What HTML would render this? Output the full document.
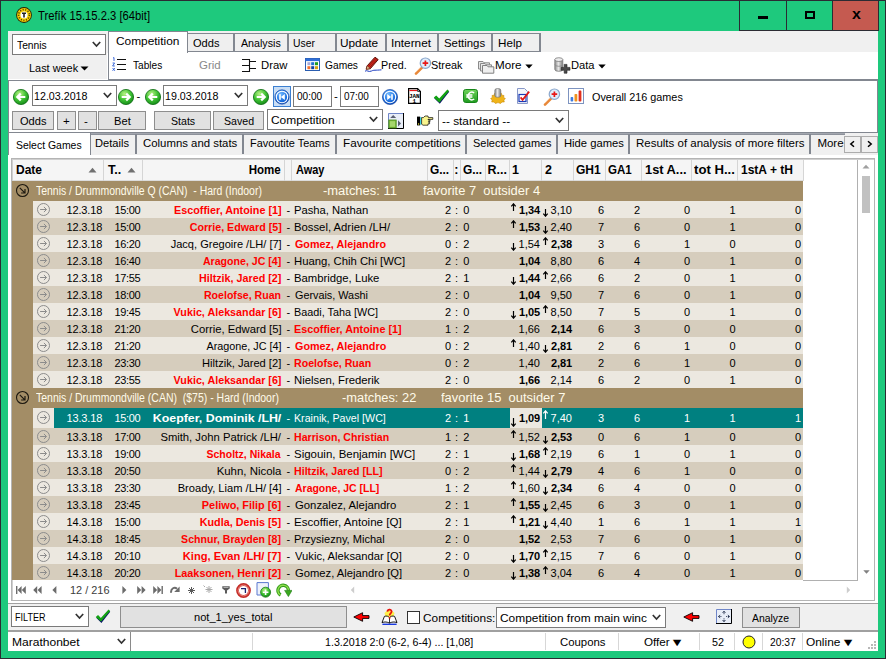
<!DOCTYPE html>
<html><head><meta charset="utf-8"><title>Trefík 15.15.2.3 [64bit]</title>
<style>
html,body{margin:0;padding:0;}
body{width:886px;height:659px;overflow:hidden;position:relative;background:#1ec97d;font-family:"Liberation Sans",sans-serif;font-size:12px;color:#000;}
div,span,svg{position:absolute;box-sizing:border-box;}
span{line-height:16px;white-space:pre;}
.b{font-weight:bold;}

</style></head>
<body>
<div style="left:0px;top:0px;width:886px;height:659px;border:1px solid #2b2b33;"></div>
<div style="left:8px;top:31px;width:870px;height:620px;background:#f0f0f0;"></div>
<span id="t1" style="top:8.0px;font-size:12px;left:37.5px;transform:scaleX(0.937);transform-origin:0 50%;">Trefík 15.15.2.3 [64bit]</span>
<div style="left:739px;top:1px;width:140px;height:30px;border-left:1px solid #2b2b33;border-bottom:1px solid #2b2b33;border-right:1px solid #2b2b33;"></div>
<div style="left:786px;top:1px;width:1px;height:29px;background:#2b2b33;"></div>
<div style="left:832px;top:1px;width:1px;height:29px;background:#2b2b33;"></div>
<div style="left:833px;top:1px;width:45px;height:29px;background:#c55a50;"></div>
<div style="left:758px;top:16px;width:10px;height:3px;background:#000;"></div>
<div style="left:805px;top:11px;width:10px;height:8px;border:2px solid #000;"></div>
<span id="t2" style="top:6.0px;font-size:15px;left:851.5px;transform:scaleX(1.0625);transform-origin:0 50%;font-weight:bold;">x</span>
<div style="left:12px;top:34px;width:94px;height:21px;background:#fff;border:1px solid #7a7a7a;"></div>
<span id="t3" style="top:37.0px;font-size:11.5px;left:17.0px;transform:scaleX(0.8939);transform-origin:0 50%;">Tennis</span>
<svg style="left:92px;top:40.5px" width="9" height="7" viewBox="0 0 9 7"><path d="M0.8 1 L4.5 5 L8.2 1" stroke="#333" stroke-width="1.7" fill="none"/></svg>
<div style="left:108px;top:52px;width:770px;height:29px;background:#fff;border-left:1px solid #828790;border-bottom:2px solid #828790;"></div>
<div style="left:107px;top:53px;width:1px;height:27px;background:#fff;"></div>
<div style="left:8px;top:79px;width:100px;height:1px;background:#fff;"></div>
<div style="left:188px;top:33px;width:47px;height:19px;background:#efefef;border:1px solid #828790;border-left:none;border-right-width:2px;"></div>
<span id="t4" style="top:35.0px;font-size:11.5px;left:193.0px;transform:scaleX(0.963);transform-origin:0 50%;">Odds</span>
<div style="left:235px;top:33px;width:54px;height:19px;background:#efefef;border:1px solid #828790;border-left:none;border-right-width:2px;"></div>
<span id="t5" style="top:35.0px;font-size:11.5px;left:240.5px;transform:scaleX(0.9286);transform-origin:0 50%;">Analysis</span>
<div style="left:289px;top:33px;width:48px;height:19px;background:#efefef;border:1px solid #828790;border-left:none;border-right-width:2px;"></div>
<span id="t6" style="top:35.0px;font-size:11.5px;left:292.9px;transform:scaleX(0.9);transform-origin:0 50%;">User</span>
<div style="left:337px;top:33px;width:50px;height:19px;background:#efefef;border:1px solid #828790;border-left:none;border-right-width:2px;"></div>
<span id="t7" style="top:35.0px;font-size:11.5px;left:340.47px;transform:scaleX(1.0278);transform-origin:0 50%;">Update</span>
<div style="left:387px;top:33px;width:52px;height:19px;background:#efefef;border:1px solid #828790;border-left:none;border-right-width:2px;"></div>
<span id="t8" style="top:35.0px;font-size:11.5px;left:390.77px;transform:scaleX(1.0263);transform-origin:0 50%;">Internet</span>
<div style="left:439px;top:33px;width:54px;height:19px;background:#efefef;border:1px solid #828790;border-left:none;border-right-width:2px;"></div>
<span id="t9" style="top:35.0px;font-size:11.5px;left:444.21px;transform:scaleX(0.99);transform-origin:0 50%;">Settings</span>
<div style="left:493px;top:33px;width:48px;height:19px;background:#efefef;border:1px solid #828790;border-left:none;border-right-width:2px;"></div>
<span id="t10" style="top:35.0px;font-size:11.5px;left:497.79px;transform:scaleX(1.0136);transform-origin:0 50%;">Help</span>
<div style="left:108px;top:31px;width:80px;height:22px;background:#fff;border:1px solid #828790;border-bottom:none;"></div>
<span id="t11" style="top:33.0px;font-size:11.5px;left:115.97px;transform:scaleX(1.0333);transform-origin:0 50%;">Competition</span>
<span id="t12" style="top:59.5px;font-size:11.5px;left:28.55px;transform:scaleX(0.949);transform-origin:0 50%;">Last week</span>
<svg style="left:80px;top:66px" width="9" height="5" viewBox="0 0 9 5"><path d="M0.5 0.5 L8.5 0.5 L4.5 4.5 Z" fill="#000"/></svg>
<span id="t13" style="top:57.0px;font-size:11.5px;left:133.0px;transform:scaleX(0.8788);transform-origin:0 50%;color:#000;">Tables</span>
<span id="t14" style="top:57.0px;font-size:11.5px;left:199.0px;color:#8a8a8a;">Grid</span>
<span id="t15" style="top:57.0px;font-size:11.5px;left:261.02px;transform:scaleX(0.9808);transform-origin:0 50%;color:#000;">Draw</span>
<span id="t16" style="top:57.0px;font-size:11.5px;left:325.01px;transform:scaleX(0.8889);transform-origin:0 50%;color:#000;">Games</span>
<span id="t17" style="top:57.0px;font-size:11.5px;left:380.57px;transform:scaleX(0.9346);transform-origin:0 50%;color:#000;">Pred.</span>
<span id="t18" style="top:57.0px;font-size:11.5px;left:430.95px;transform:scaleX(0.9469);transform-origin:0 50%;color:#000;">Streak</span>
<span id="t19" style="top:57.0px;font-size:11.5px;left:494.79px;transform:scaleX(1.012);transform-origin:0 50%;color:#000;">More</span>
<span id="t20" style="top:57.0px;font-size:11.5px;left:570.53px;transform:scaleX(0.9696);transform-origin:0 50%;color:#000;">Data</span>
<svg style="left:525px;top:64px" width="8" height="5" viewBox="0 0 8 5"><path d="M0.3 0.5 L7.7 0.5 L4 4.5 Z" fill="#000"/></svg>
<svg style="left:598px;top:64px" width="8" height="5" viewBox="0 0 8 5"><path d="M0.3 0.5 L7.7 0.5 L4 4.5 Z" fill="#000"/></svg>
<div style="left:8px;top:80px;width:100px;height:1px;background:#828790;"></div>
<div style="left:8px;top:81px;width:870px;height:52px;background:#fff;border-left:1px solid #828790;border-right:1px solid #828790;"></div>
<div style="left:32px;top:85px;width:85px;height:21px;background:#fff;border:1px solid #7a7a7a;"></div>
<span id="t21" style="top:88.0px;font-size:11.5px;left:34.17px;transform:scaleX(0.9286);transform-origin:0 50%;">12.03.2018</span>
<svg style="left:103px;top:91.5px" width="9" height="7" viewBox="0 0 9 7"><path d="M0.8 1 L4.5 5 L8.2 1" stroke="#333" stroke-width="1.7" fill="none"/></svg>
<div style="left:163px;top:85px;width:85px;height:21px;background:#fff;border:1px solid #7a7a7a;"></div>
<span id="t22" style="top:88.0px;font-size:11.5px;left:165.17px;transform:scaleX(0.9286);transform-origin:0 50%;">19.03.2018</span>
<svg style="left:234px;top:91.5px" width="9" height="7" viewBox="0 0 9 7"><path d="M0.8 1 L4.5 5 L8.2 1" stroke="#333" stroke-width="1.7" fill="none"/></svg>
<span id="t23" style="top:88.0px;font-size:11.5px;left:136.5px;">-</span>
<span id="t24" style="top:88.0px;font-size:11.5px;left:334.0px;">-</span>
<div style="left:293px;top:86px;width:39px;height:21px;background:#fff;border:1px solid #7a7a7a;"></div>
<span id="t25" style="top:88.0px;font-size:11.5px;left:297.0px;transform:scaleX(0.8724);transform-origin:0 50%;">00:00</span>
<div style="left:340px;top:86px;width:39px;height:21px;background:#fff;border:1px solid #7a7a7a;"></div>
<span id="t26" style="top:88.0px;font-size:11.5px;left:343.5px;transform:scaleX(0.8621);transform-origin:0 50%;">07:00</span>
<span id="t27" style="top:88.5px;font-size:11.5px;left:591.5px;transform:scaleX(0.9406);transform-origin:0 50%;">Overall 216 games</span>
<div style="left:12px;top:111px;width:42px;height:19px;background:#e1e1e1;border:1px solid #8e8e8e;"></div>
<span id="t28" style="top:112.5px;font-size:11.5px;left:20.0px;transform:scaleX(0.963);transform-origin:0 50%;">Odds</span>
<div style="left:57px;top:111px;width:19px;height:19px;background:#e1e1e1;border:1px solid #8e8e8e;"></div>
<span id="t29" style="top:112.5px;font-size:11.5px;left:63.0px;">+</span>
<div style="left:78px;top:111px;width:19px;height:19px;background:#e1e1e1;border:1px solid #8e8e8e;"></div>
<span id="t30" style="top:112.5px;font-size:11.5px;left:84.0px;">-</span>
<div style="left:98px;top:111px;width:48px;height:19px;background:#e1e1e1;border:1px solid #8e8e8e;"></div>
<span id="t31" style="top:112.5px;font-size:11.5px;left:114.03px;transform:scaleX(0.9688);transform-origin:0 50%;">Bet</span>
<div style="left:154px;top:111px;width:57px;height:19px;background:#e1e1e1;border:1px solid #8e8e8e;"></div>
<span id="t32" style="top:112.5px;font-size:11.5px;left:171.28px;transform:scaleX(0.92);transform-origin:0 50%;">Stats</span>
<div style="left:213px;top:111px;width:51px;height:19px;background:#e1e1e1;border:1px solid #8e8e8e;"></div>
<span id="t33" style="top:112.5px;font-size:11.5px;left:223.88px;transform:scaleX(0.9226);transform-origin:0 50%;">Saved</span>
<div style="left:267px;top:109px;width:116px;height:21px;background:#fff;border:1px solid #7a7a7a;"></div>
<span id="t34" style="top:111.5px;font-size:11.5px;left:270.86px;transform:scaleX(1.0367);transform-origin:0 50%;">Competition</span>
<svg style="left:369px;top:115.5px" width="9" height="7" viewBox="0 0 9 7"><path d="M0.8 1 L4.5 5 L8.2 1" stroke="#333" stroke-width="1.7" fill="none"/></svg>
<div style="left:438px;top:110px;width:131px;height:21px;background:#fff;border:1px solid #7a7a7a;"></div>
<span id="t35" style="top:112.5px;font-size:11.5px;left:442.07px;transform:scaleX(1.0262);transform-origin:0 50%;">-- standard --</span>
<svg style="left:555px;top:116.5px" width="9" height="7" viewBox="0 0 9 7"><path d="M0.8 1 L4.5 5 L8.2 1" stroke="#333" stroke-width="1.7" fill="none"/></svg>
<div style="left:8px;top:132px;width:870px;height:1px;background:#828790;"></div>
<div style="left:8px;top:133px;width:870px;height:22px;background:#f0f0f0;"></div>
<div style="left:91px;top:133px;width:754px;height:2px;background:linear-gradient(#aeb2b9,#828790);"></div>
<div style="left:8px;top:155px;width:870px;height:448px;background:#fff;"></div>
<div style="left:135px;top:134px;width:2px;height:20px;background:#828790;"></div>
<span id="t36" style="top:135.0px;font-size:11.5px;left:95.23px;transform:scaleX(0.9676);transform-origin:0 50%;">Details</span>
<div style="left:242px;top:134px;width:2px;height:20px;background:#828790;"></div>
<span id="t37" style="top:135.0px;font-size:11.5px;left:142.91px;transform:scaleX(0.9894);transform-origin:0 50%;">Columns and stats</span>
<div style="left:335px;top:134px;width:2px;height:20px;background:#828790;"></div>
<span id="t38" style="top:135.0px;font-size:11.5px;left:250.15px;transform:scaleX(0.9482);transform-origin:0 50%;">Favoutite Teams</span>
<div style="left:465px;top:134px;width:2px;height:20px;background:#828790;"></div>
<span id="t39" style="top:135.0px;font-size:11.5px;left:342.88px;transform:scaleX(1.0175);transform-origin:0 50%;">Favourite competitions</span>
<div style="left:556px;top:134px;width:2px;height:20px;background:#828790;"></div>
<span id="t40" style="top:135.0px;font-size:11.5px;left:472.95px;transform:scaleX(0.9531);transform-origin:0 50%;">Selected games</span>
<div style="left:628px;top:134px;width:2px;height:20px;background:#828790;"></div>
<span id="t41" style="top:135.0px;font-size:11.5px;left:563.52px;transform:scaleX(0.975);transform-origin:0 50%;">Hide games</span>
<div style="left:809px;top:134px;width:2px;height:20px;background:#828790;"></div>
<span id="t42" style="top:135.0px;font-size:11.5px;left:636.0px;transform:scaleX(0.9988);transform-origin:0 50%;">Results of analysis of more filters</span>
<span id="t43" style="top:135.0px;font-size:11.5px;left:817.4px;">More</span>
<div style="left:8px;top:132px;width:83px;height:23px;background:#fff;border:1px solid #828790;border-bottom:none;"></div>
<span id="t44" style="top:136.5px;font-size:11.5px;left:16.09px;transform:scaleX(0.9085);transform-origin:0 50%;">Select Games</span>
<div style="left:844px;top:136px;width:17px;height:17px;background:#f0f0f0;border:1px solid #adadad;"></div>
<svg style="left:848px;top:140px" width="9" height="8" viewBox="0 0 9 8"><path d="M6 1.2 L2.8 4 L6 6.8" stroke="#000" stroke-width="1.5" fill="none"/></svg>
<div style="left:861px;top:136px;width:17px;height:17px;background:#f0f0f0;border:1px solid #adadad;"></div>
<svg style="left:865px;top:140px" width="9" height="8" viewBox="0 0 9 8"><path d="M3 1.2 L6.2 4 L3 6.8" stroke="#000" stroke-width="1.5" fill="none"/></svg>
<div style="left:11px;top:158px;width:864px;height:443px;background:#fff;border:1px solid #b4b4b4;"></div>
<div style="left:12px;top:159px;width:862px;height:1px;background:#cfcfcf;"></div>
<div style="left:12px;top:159px;width:1px;height:441px;background:#cfcfcf;"></div>
<div style="left:13px;top:160px;width:790px;height:21px;background:#f5f5f5;border-bottom:1px solid #dcdcdc;"></div>
<div style="left:103px;top:160px;width:1px;height:21px;background:#d5d5d5;"></div>
<div style="left:142px;top:160px;width:1px;height:21px;background:#d5d5d5;"></div>
<div style="left:284px;top:160px;width:1px;height:21px;background:#d5d5d5;"></div>
<div style="left:291px;top:160px;width:1px;height:21px;background:#d5d5d5;"></div>
<div style="left:427px;top:160px;width:1px;height:21px;background:#d5d5d5;"></div>
<div style="left:453px;top:160px;width:1px;height:21px;background:#d5d5d5;"></div>
<div style="left:460px;top:160px;width:1px;height:21px;background:#d5d5d5;"></div>
<div style="left:485px;top:160px;width:1px;height:21px;background:#d5d5d5;"></div>
<div style="left:509px;top:160px;width:1px;height:21px;background:#d5d5d5;"></div>
<div style="left:541px;top:160px;width:1px;height:21px;background:#d5d5d5;"></div>
<div style="left:573px;top:160px;width:1px;height:21px;background:#d5d5d5;"></div>
<div style="left:605px;top:160px;width:1px;height:21px;background:#d5d5d5;"></div>
<div style="left:641px;top:160px;width:1px;height:21px;background:#d5d5d5;"></div>
<div style="left:691px;top:160px;width:1px;height:21px;background:#d5d5d5;"></div>
<div style="left:737px;top:160px;width:1px;height:21px;background:#d5d5d5;"></div>
<div style="left:803px;top:160px;width:1px;height:21px;background:#d5d5d5;"></div>
<span id="t45" style="top:161.5px;font-size:12.5px;left:15.54px;transform:scaleX(0.9615);transform-origin:0 50%;font-weight:bold;">Date</span>
<span id="t46" style="top:161.5px;font-size:12.5px;left:108.1px;font-weight:bold;">T..</span>
<span id="t47" style="top:161.5px;font-size:12.5px;right:604.82px;transform:scaleX(0.9242);transform-origin:100% 50%;font-weight:bold;">Home</span>
<span id="t48" style="top:161.5px;font-size:12.5px;left:295.5px;transform:scaleX(0.875);transform-origin:0 50%;font-weight:bold;">Away</span>
<span id="t49" style="top:161.5px;font-size:12.5px;left:430.0px;transform:scaleX(0.95);transform-origin:0 50%;font-weight:bold;">G...</span>
<span id="t50" style="top:161.5px;font-size:12.5px;left:454.2px;font-weight:bold;">:</span>
<span id="t51" style="top:161.5px;font-size:12.5px;left:463.0px;transform:scaleX(0.95);transform-origin:0 50%;font-weight:bold;">G...</span>
<span id="t52" style="top:161.5px;font-size:12.5px;left:487.5px;font-weight:bold;">R...</span>
<span id="t53" style="top:161.5px;font-size:12.5px;left:512.0px;font-weight:bold;">1</span>
<span id="t54" style="top:161.5px;font-size:12.5px;left:545.0px;font-weight:bold;">2</span>
<span id="t55" style="top:161.5px;font-size:12.5px;left:576.0px;transform:scaleX(0.9615);transform-origin:0 50%;font-weight:bold;">GH1</span>
<span id="t56" style="top:161.5px;font-size:12.5px;left:608.0px;transform:scaleX(0.9231);transform-origin:0 50%;font-weight:bold;">GA1</span>
<span id="t57" style="top:161.5px;font-size:12.5px;left:645.47px;transform:scaleX(1.0256);transform-origin:0 50%;font-weight:bold;">1st A...</span>
<span id="t58" style="top:161.5px;font-size:12.5px;left:694.0px;transform:scaleX(1.0526);transform-origin:0 50%;font-weight:bold;">tot H...</span>
<span id="t59" style="top:161.5px;font-size:12.5px;left:740.54px;transform:scaleX(0.9615);transform-origin:0 50%;font-weight:bold;">1stA + tH</span>
<svg style="left:88px;top:167px" width="9" height="6" viewBox="0 0 9 6"><path d="M0.5 5.5 L4.5 0.8 L8.5 5.5 Z" fill="#707070"/></svg>
<svg style="left:127px;top:167px" width="9" height="6" viewBox="0 0 9 6"><path d="M0.5 5.5 L4.5 0.8 L8.5 5.5 Z" fill="#707070"/></svg>
<div style="left:857px;top:160px;width:1px;height:421px;background:#b0b0b0;"></div>
<div style="left:862px;top:176px;width:8px;height:37px;background:#c1c1c1;"></div>
<svg style="left:862px;top:164px" width="8" height="5" viewBox="0 0 8 5"><path d="M0.5 4.5 L4 0.8 L7.5 4.5 Z" fill="#a0a0a0"/></svg>
<svg style="left:862.5px;top:569.5px" width="7" height="4" viewBox="0 0 7 4"><path d="M0.3 0.3 L3.5 3.8 L6.7 0.3 Z" fill="#808080"/></svg>
<div style="left:12px;top:181px;width:791px;height:399px;background:#a38d66;"></div>
<svg style="left:15px;top:183px" width="15" height="15" viewBox="0 0 15 15"><circle cx="7.5" cy="7.5" r="6" fill="none" stroke="#1c1810" stroke-width="1.1"/><path d="M4.8 4.8 L9.8 9.8 M6.1 10.0 H10.0 V6.1" stroke="#1c1810" stroke-width="1.2" fill="none"/></svg>
<span id="t60" style="top:183.0px;font-size:12px;left:36.0px;transform:scaleX(0.8707);transform-origin:0 50%;color:#fffbea;">Tennis / Drummondville Q (CAN)  - Hard (Indoor)</span>
<span id="t61" style="top:183.0px;font-size:12.5px;left:322.76px;transform:scaleX(1.0357);transform-origin:0 50%;color:#fffbea;">-matches: 11</span>
<span id="t62" style="top:183.0px;font-size:12.5px;left:422.7px;transform:scaleX(1.0336);transform-origin:0 50%;color:#fffbea;">favorite 7  outsider 4</span>
<div style="left:33px;top:201px;width:770px;height:17px;background:#ece8e0;"></div>
<svg style="left:36px;top:202px" width="15" height="15" viewBox="0 0 15 15"><circle cx="7.5" cy="7.5" r="6" fill="none" stroke="#8c8c8c" stroke-width="1"/><path d="M4.1 7.5 H10.3 M7.9 4.9 L10.5 7.5 L7.9 10.1" stroke="#8c8c8c" stroke-width="1" fill="none"/></svg>
<span style="top:201.5px;font-size:11px;color:#000;right:783.7px;letter-spacing:-0.16px;margin-right:0.16px;">12.3.18</span>
<span style="top:201.5px;font-size:11px;color:#000;left:114.4px;letter-spacing:-0.3px;">15:00</span>
<span id="t63" style="top:201.5px;font-size:11px;right:604.5px;transform:scaleX(0.9815);transform-origin:100% 50%;font-weight:bold;color:#ff0000;">Escoffier, Antoine [1]</span>
<span style="top:201.5px;font-size:11px;color:#000;left:286.6px;">-</span>
<span id="t64" style="top:201.5px;font-size:11px;left:294.08px;transform:scaleX(1.0183);transform-origin:0 50%;color:#000;">Pasha, Nathan</span>
<span style="top:201.5px;font-size:11px;color:#000;right:434.8px;">2</span>
<span style="top:202.0px;font-size:11px;color:#000;left:455px;">:</span>
<span style="top:201.5px;font-size:11px;color:#000;left:463.2px;">0</span>
<svg style="left:510px;top:203px" width="7" height="8" viewBox="0 0 7 8"><path d="M3.5 0.8 V8 M1.3 3.3 L3.5 0.8 L5.7 3.3" stroke="#000" stroke-width="1.2" fill="none"/></svg>
<span style="top:201.5px;font-size:11px;color:#000;font-weight:bold;right:346px;letter-spacing:-0.12px;margin-right:0.12px;">1,34</span>
<svg style="left:542px;top:209px" width="7" height="8" viewBox="0 0 7 8"><path d="M3.5 0 V7.2 M1.3 4.7 L3.5 7.2 L5.7 4.7" stroke="#000" stroke-width="1.2" fill="none"/></svg>
<span style="top:201.5px;font-size:11px;color:#000;right:314px;">3,10</span>
<span style="top:201.5px;font-size:11px;color:#000;right:282px;">6</span>
<span style="top:201.5px;font-size:11px;color:#000;right:246px;">2</span>
<span style="top:201.5px;font-size:11px;color:#000;right:196px;">0</span>
<span style="top:201.5px;font-size:11px;color:#000;right:150.5px;">1</span>
<span style="top:201.5px;font-size:11px;color:#000;right:85px;">0</span>
<div style="left:33px;top:218px;width:770px;height:17px;background:#d6cdbd;"></div>
<svg style="left:36px;top:219px" width="15" height="15" viewBox="0 0 15 15"><circle cx="7.5" cy="7.5" r="6" fill="none" stroke="#8c8c8c" stroke-width="1"/><path d="M4.1 7.5 H10.3 M7.9 4.9 L10.5 7.5 L7.9 10.1" stroke="#8c8c8c" stroke-width="1" fill="none"/></svg>
<span style="top:218.5px;font-size:11px;color:#000;right:783.7px;letter-spacing:-0.16px;margin-right:0.16px;">12.3.18</span>
<span style="top:218.5px;font-size:11px;color:#000;left:114.4px;letter-spacing:-0.3px;">15:00</span>
<span id="t65" style="top:218.5px;font-size:11px;right:604.37px;transform:scaleX(0.9713);transform-origin:100% 50%;font-weight:bold;color:#ff0000;">Corrie, Edward [5]</span>
<span style="top:218.5px;font-size:11px;color:#000;left:286.6px;">-</span>
<span id="t66" style="top:218.5px;font-size:11px;left:294.07px;transform:scaleX(1.0269);transform-origin:0 50%;color:#000;">Bossel, Adrien /LH/</span>
<span style="top:218.5px;font-size:11px;color:#000;right:434.8px;">2</span>
<span style="top:219.0px;font-size:11px;color:#000;left:455px;">:</span>
<span style="top:218.5px;font-size:11px;color:#000;left:463.2px;">0</span>
<svg style="left:510px;top:220px" width="7" height="8" viewBox="0 0 7 8"><path d="M3.5 0.8 V8 M1.3 3.3 L3.5 0.8 L5.7 3.3" stroke="#000" stroke-width="1.2" fill="none"/></svg>
<span style="top:218.5px;font-size:11px;color:#000;font-weight:bold;right:346px;letter-spacing:-0.12px;margin-right:0.12px;">1,53</span>
<svg style="left:542px;top:226px" width="7" height="8" viewBox="0 0 7 8"><path d="M3.5 0 V7.2 M1.3 4.7 L3.5 7.2 L5.7 4.7" stroke="#000" stroke-width="1.2" fill="none"/></svg>
<span style="top:218.5px;font-size:11px;color:#000;right:314px;">2,40</span>
<span style="top:218.5px;font-size:11px;color:#000;right:282px;">7</span>
<span style="top:218.5px;font-size:11px;color:#000;right:246px;">6</span>
<span style="top:218.5px;font-size:11px;color:#000;right:196px;">0</span>
<span style="top:218.5px;font-size:11px;color:#000;right:150.5px;">1</span>
<span style="top:218.5px;font-size:11px;color:#000;right:85px;">0</span>
<div style="left:33px;top:235px;width:770px;height:17px;background:#ece8e0;"></div>
<svg style="left:36px;top:236px" width="15" height="15" viewBox="0 0 15 15"><circle cx="7.5" cy="7.5" r="6" fill="none" stroke="#8c8c8c" stroke-width="1"/><path d="M4.1 7.5 H10.3 M7.9 4.9 L10.5 7.5 L7.9 10.1" stroke="#8c8c8c" stroke-width="1" fill="none"/></svg>
<span style="top:235.5px;font-size:11px;color:#000;right:783.7px;letter-spacing:-0.16px;margin-right:0.16px;">12.3.18</span>
<span style="top:235.5px;font-size:11px;color:#000;left:114.4px;letter-spacing:-0.3px;">16:20</span>
<span id="t67" style="top:235.5px;font-size:11px;right:604.43px;transform:scaleX(1.0027);transform-origin:100% 50%;color:#000;">Jacq, Gregoire /LH/ [7]</span>
<span style="top:235.5px;font-size:11px;color:#000;left:286.6px;">-</span>
<span id="t68" style="top:235.5px;font-size:11px;left:295.1px;transform:scaleX(0.9774);transform-origin:0 50%;font-weight:bold;color:#ff0000;">Gomez, Alejandro</span>
<span style="top:235.5px;font-size:11px;color:#000;right:434.8px;">0</span>
<span style="top:236.0px;font-size:11px;color:#000;left:455px;">:</span>
<span style="top:235.5px;font-size:11px;color:#000;left:463.2px;">2</span>
<svg style="left:510px;top:243px" width="7" height="8" viewBox="0 0 7 8"><path d="M3.5 0 V7.2 M1.3 4.7 L3.5 7.2 L5.7 4.7" stroke="#000" stroke-width="1.2" fill="none"/></svg>
<span style="top:235.5px;font-size:11px;color:#000;right:346px;">1,54</span>
<svg style="left:542px;top:237px" width="7" height="8" viewBox="0 0 7 8"><path d="M3.5 0.8 V8 M1.3 3.3 L3.5 0.8 L5.7 3.3" stroke="#000" stroke-width="1.2" fill="none"/></svg>
<span style="top:235.5px;font-size:11px;color:#000;font-weight:bold;right:314px;letter-spacing:-0.12px;margin-right:0.12px;">2,38</span>
<span style="top:235.5px;font-size:11px;color:#000;right:282px;">3</span>
<span style="top:235.5px;font-size:11px;color:#000;right:246px;">6</span>
<span style="top:235.5px;font-size:11px;color:#000;right:196px;">1</span>
<span style="top:235.5px;font-size:11px;color:#000;right:150.5px;">0</span>
<span style="top:235.5px;font-size:11px;color:#000;right:85px;">0</span>
<div style="left:33px;top:252px;width:770px;height:17px;background:#d6cdbd;"></div>
<svg style="left:36px;top:253px" width="15" height="15" viewBox="0 0 15 15"><circle cx="7.5" cy="7.5" r="6" fill="none" stroke="#8c8c8c" stroke-width="1"/><path d="M4.1 7.5 H10.3 M7.9 4.9 L10.5 7.5 L7.9 10.1" stroke="#8c8c8c" stroke-width="1" fill="none"/></svg>
<span style="top:252.5px;font-size:11px;color:#000;right:783.7px;letter-spacing:-0.16px;margin-right:0.16px;">12.3.18</span>
<span style="top:252.5px;font-size:11px;color:#000;left:114.4px;letter-spacing:-0.3px;">16:40</span>
<span id="t69" style="top:252.5px;font-size:11px;right:604.81px;transform:scaleX(0.9642);transform-origin:100% 50%;font-weight:bold;color:#ff0000;">Aragone, JC [4]</span>
<span style="top:252.5px;font-size:11px;color:#000;left:286.6px;">-</span>
<span id="t70" style="top:252.5px;font-size:11px;left:294.07px;transform:scaleX(1.0271);transform-origin:0 50%;color:#000;">Huang, Chih Chi [WC]</span>
<span style="top:252.5px;font-size:11px;color:#000;right:434.8px;">2</span>
<span style="top:253.0px;font-size:11px;color:#000;left:455px;">:</span>
<span style="top:252.5px;font-size:11px;color:#000;left:463.2px;">0</span>

<span style="top:252.5px;font-size:11px;color:#000;font-weight:bold;right:346px;letter-spacing:-0.12px;margin-right:0.12px;">1,04</span>

<span style="top:252.5px;font-size:11px;color:#000;right:314px;">8,80</span>
<span style="top:252.5px;font-size:11px;color:#000;right:282px;">6</span>
<span style="top:252.5px;font-size:11px;color:#000;right:246px;">4</span>
<span style="top:252.5px;font-size:11px;color:#000;right:196px;">0</span>
<span style="top:252.5px;font-size:11px;color:#000;right:150.5px;">1</span>
<span style="top:252.5px;font-size:11px;color:#000;right:85px;">0</span>
<div style="left:33px;top:269px;width:770px;height:17px;background:#ece8e0;"></div>
<svg style="left:36px;top:270px" width="15" height="15" viewBox="0 0 15 15"><circle cx="7.5" cy="7.5" r="6" fill="none" stroke="#8c8c8c" stroke-width="1"/><path d="M4.1 7.5 H10.3 M7.9 4.9 L10.5 7.5 L7.9 10.1" stroke="#8c8c8c" stroke-width="1" fill="none"/></svg>
<span style="top:269.5px;font-size:11px;color:#000;right:783.7px;letter-spacing:-0.16px;margin-right:0.16px;">12.3.18</span>
<span style="top:269.5px;font-size:11px;color:#000;left:114.4px;letter-spacing:-0.3px;">17:55</span>
<span id="t71" style="top:269.5px;font-size:11px;right:604.75px;transform:scaleX(0.9771);transform-origin:100% 50%;font-weight:bold;color:#ff0000;">Hiltzik, Jared [2]</span>
<span style="top:269.5px;font-size:11px;color:#000;left:286.6px;">-</span>
<span id="t72" style="top:269.5px;font-size:11px;left:294.07px;transform:scaleX(1.0268);transform-origin:0 50%;color:#000;">Bambridge, Luke</span>
<span style="top:269.5px;font-size:11px;color:#000;right:434.8px;">2</span>
<span style="top:270.0px;font-size:11px;color:#000;left:455px;">:</span>
<span style="top:269.5px;font-size:11px;color:#000;left:463.2px;">1</span>
<svg style="left:510px;top:277px" width="7" height="8" viewBox="0 0 7 8"><path d="M3.5 0 V7.2 M1.3 4.7 L3.5 7.2 L5.7 4.7" stroke="#000" stroke-width="1.2" fill="none"/></svg>
<span style="top:269.5px;font-size:11px;color:#000;font-weight:bold;right:346px;letter-spacing:-0.12px;margin-right:0.12px;">1,44</span>
<svg style="left:542px;top:271px" width="7" height="8" viewBox="0 0 7 8"><path d="M3.5 0.8 V8 M1.3 3.3 L3.5 0.8 L5.7 3.3" stroke="#000" stroke-width="1.2" fill="none"/></svg>
<span style="top:269.5px;font-size:11px;color:#000;right:314px;">2,66</span>
<span style="top:269.5px;font-size:11px;color:#000;right:282px;">6</span>
<span style="top:269.5px;font-size:11px;color:#000;right:246px;">2</span>
<span style="top:269.5px;font-size:11px;color:#000;right:196px;">0</span>
<span style="top:269.5px;font-size:11px;color:#000;right:150.5px;">1</span>
<span style="top:269.5px;font-size:11px;color:#000;right:85px;">0</span>
<div style="left:33px;top:286px;width:770px;height:17px;background:#d6cdbd;"></div>
<svg style="left:36px;top:287px" width="15" height="15" viewBox="0 0 15 15"><circle cx="7.5" cy="7.5" r="6" fill="none" stroke="#8c8c8c" stroke-width="1"/><path d="M4.1 7.5 H10.3 M7.9 4.9 L10.5 7.5 L7.9 10.1" stroke="#8c8c8c" stroke-width="1" fill="none"/></svg>
<span style="top:286.5px;font-size:11px;color:#000;right:783.7px;letter-spacing:-0.16px;margin-right:0.16px;">12.3.18</span>
<span style="top:286.5px;font-size:11px;color:#000;left:114.4px;letter-spacing:-0.3px;">18:00</span>
<span id="t73" style="top:286.5px;font-size:11px;right:605.02px;transform:scaleX(0.9633);transform-origin:100% 50%;font-weight:bold;color:#ff0000;">Roelofse, Ruan</span>
<span style="top:286.5px;font-size:11px;color:#000;left:286.6px;">-</span>
<span id="t74" style="top:286.5px;font-size:11px;left:295.1px;transform:scaleX(0.9838);transform-origin:0 50%;color:#000;">Gervais, Washi</span>
<span style="top:286.5px;font-size:11px;color:#000;right:434.8px;">2</span>
<span style="top:287.0px;font-size:11px;color:#000;left:455px;">:</span>
<span style="top:286.5px;font-size:11px;color:#000;left:463.2px;">0</span>

<span style="top:286.5px;font-size:11px;color:#000;font-weight:bold;right:346px;letter-spacing:-0.12px;margin-right:0.12px;">1,04</span>

<span style="top:286.5px;font-size:11px;color:#000;right:314px;">9,50</span>
<span style="top:286.5px;font-size:11px;color:#000;right:282px;">7</span>
<span style="top:286.5px;font-size:11px;color:#000;right:246px;">6</span>
<span style="top:286.5px;font-size:11px;color:#000;right:196px;">0</span>
<span style="top:286.5px;font-size:11px;color:#000;right:150.5px;">1</span>
<span style="top:286.5px;font-size:11px;color:#000;right:85px;">0</span>
<div style="left:33px;top:303px;width:770px;height:17px;background:#ece8e0;"></div>
<svg style="left:36px;top:304px" width="15" height="15" viewBox="0 0 15 15"><circle cx="7.5" cy="7.5" r="6" fill="none" stroke="#8c8c8c" stroke-width="1"/><path d="M4.1 7.5 H10.3 M7.9 4.9 L10.5 7.5 L7.9 10.1" stroke="#8c8c8c" stroke-width="1" fill="none"/></svg>
<span style="top:303.5px;font-size:11px;color:#000;right:783.7px;letter-spacing:-0.16px;margin-right:0.16px;">12.3.18</span>
<span style="top:303.5px;font-size:11px;color:#000;left:114.4px;letter-spacing:-0.3px;">19:45</span>
<span id="t75" style="top:303.5px;font-size:11px;right:604.66px;transform:scaleX(0.9764);transform-origin:100% 50%;font-weight:bold;color:#ff0000;">Vukic, Aleksandar [6]</span>
<span style="top:303.5px;font-size:11px;color:#000;left:286.6px;">-</span>
<span id="t76" style="top:303.5px;font-size:11px;left:294.12px;transform:scaleX(0.9833);transform-origin:0 50%;color:#000;">Baadi, Taha [WC]</span>
<span style="top:303.5px;font-size:11px;color:#000;right:434.8px;">2</span>
<span style="top:304.0px;font-size:11px;color:#000;left:455px;">:</span>
<span style="top:303.5px;font-size:11px;color:#000;left:463.2px;">0</span>
<svg style="left:510px;top:311px" width="7" height="8" viewBox="0 0 7 8"><path d="M3.5 0 V7.2 M1.3 4.7 L3.5 7.2 L5.7 4.7" stroke="#000" stroke-width="1.2" fill="none"/></svg>
<span style="top:303.5px;font-size:11px;color:#000;font-weight:bold;right:346px;letter-spacing:-0.12px;margin-right:0.12px;">1,05</span>
<svg style="left:542px;top:305px" width="7" height="8" viewBox="0 0 7 8"><path d="M3.5 0.8 V8 M1.3 3.3 L3.5 0.8 L5.7 3.3" stroke="#000" stroke-width="1.2" fill="none"/></svg>
<span style="top:303.5px;font-size:11px;color:#000;right:314px;">8,50</span>
<span style="top:303.5px;font-size:11px;color:#000;right:282px;">7</span>
<span style="top:303.5px;font-size:11px;color:#000;right:246px;">5</span>
<span style="top:303.5px;font-size:11px;color:#000;right:196px;">0</span>
<span style="top:303.5px;font-size:11px;color:#000;right:150.5px;">1</span>
<span style="top:303.5px;font-size:11px;color:#000;right:85px;">0</span>
<div style="left:33px;top:320px;width:770px;height:17px;background:#d6cdbd;"></div>
<svg style="left:36px;top:321px" width="15" height="15" viewBox="0 0 15 15"><circle cx="7.5" cy="7.5" r="6" fill="none" stroke="#8c8c8c" stroke-width="1"/><path d="M4.1 7.5 H10.3 M7.9 4.9 L10.5 7.5 L7.9 10.1" stroke="#8c8c8c" stroke-width="1" fill="none"/></svg>
<span style="top:320.5px;font-size:11px;color:#000;right:783.7px;letter-spacing:-0.16px;margin-right:0.16px;">12.3.18</span>
<span style="top:320.5px;font-size:11px;color:#000;left:114.4px;letter-spacing:-0.3px;">21:20</span>
<span id="t77" style="top:320.5px;font-size:11px;right:604.43px;transform:scaleX(1.0241);transform-origin:100% 50%;color:#000;">Corrie, Edward [5]</span>
<span style="top:320.5px;font-size:11px;color:#000;left:286.6px;">-</span>
<span id="t78" style="top:320.5px;font-size:11px;left:294.12px;transform:scaleX(0.9815);transform-origin:0 50%;font-weight:bold;color:#ff0000;">Escoffier, Antoine [1]</span>
<span style="top:320.5px;font-size:11px;color:#000;right:434.8px;">1</span>
<span style="top:321.0px;font-size:11px;color:#000;left:455px;">:</span>
<span style="top:320.5px;font-size:11px;color:#000;left:463.2px;">2</span>

<span style="top:320.5px;font-size:11px;color:#000;right:346px;">1,66</span>

<span style="top:320.5px;font-size:11px;color:#000;font-weight:bold;right:314px;letter-spacing:-0.12px;margin-right:0.12px;">2,14</span>
<span style="top:320.5px;font-size:11px;color:#000;right:282px;">6</span>
<span style="top:320.5px;font-size:11px;color:#000;right:246px;">3</span>
<span style="top:320.5px;font-size:11px;color:#000;right:196px;">0</span>
<span style="top:320.5px;font-size:11px;color:#000;right:150.5px;">0</span>
<span style="top:320.5px;font-size:11px;color:#000;right:85px;">0</span>
<div style="left:33px;top:337px;width:770px;height:17px;background:#ece8e0;"></div>
<svg style="left:36px;top:338px" width="15" height="15" viewBox="0 0 15 15"><circle cx="7.5" cy="7.5" r="6" fill="none" stroke="#8c8c8c" stroke-width="1"/><path d="M4.1 7.5 H10.3 M7.9 4.9 L10.5 7.5 L7.9 10.1" stroke="#8c8c8c" stroke-width="1" fill="none"/></svg>
<span style="top:337.5px;font-size:11px;color:#000;right:783.7px;letter-spacing:-0.16px;margin-right:0.16px;">12.3.18</span>
<span style="top:337.5px;font-size:11px;color:#000;left:114.4px;letter-spacing:-0.3px;">21:20</span>
<span id="t79" style="top:337.5px;font-size:11px;right:604.67px;transform:scaleX(0.9803);transform-origin:100% 50%;color:#000;">Aragone, JC [4]</span>
<span style="top:337.5px;font-size:11px;color:#000;left:286.6px;">-</span>
<span id="t80" style="top:337.5px;font-size:11px;left:295.1px;transform:scaleX(0.9796);transform-origin:0 50%;font-weight:bold;color:#ff0000;">Gomez, Alejandro</span>
<span style="top:337.5px;font-size:11px;color:#000;right:434.8px;">0</span>
<span style="top:338.0px;font-size:11px;color:#000;left:455px;">:</span>
<span style="top:337.5px;font-size:11px;color:#000;left:463.2px;">2</span>
<svg style="left:510px;top:339px" width="7" height="8" viewBox="0 0 7 8"><path d="M3.5 0.8 V8 M1.3 3.3 L3.5 0.8 L5.7 3.3" stroke="#000" stroke-width="1.2" fill="none"/></svg>
<span style="top:337.5px;font-size:11px;color:#000;right:346px;">1,40</span>
<svg style="left:542px;top:345px" width="7" height="8" viewBox="0 0 7 8"><path d="M3.5 0 V7.2 M1.3 4.7 L3.5 7.2 L5.7 4.7" stroke="#000" stroke-width="1.2" fill="none"/></svg>
<span style="top:337.5px;font-size:11px;color:#000;font-weight:bold;right:314px;letter-spacing:-0.12px;margin-right:0.12px;">2,81</span>
<span style="top:337.5px;font-size:11px;color:#000;right:282px;">2</span>
<span style="top:337.5px;font-size:11px;color:#000;right:246px;">6</span>
<span style="top:337.5px;font-size:11px;color:#000;right:196px;">1</span>
<span style="top:337.5px;font-size:11px;color:#000;right:150.5px;">0</span>
<span style="top:337.5px;font-size:11px;color:#000;right:85px;">0</span>
<div style="left:33px;top:354px;width:770px;height:17px;background:#d6cdbd;"></div>
<svg style="left:36px;top:355px" width="15" height="15" viewBox="0 0 15 15"><circle cx="7.5" cy="7.5" r="6" fill="none" stroke="#8c8c8c" stroke-width="1"/><path d="M4.1 7.5 H10.3 M7.9 4.9 L10.5 7.5 L7.9 10.1" stroke="#8c8c8c" stroke-width="1" fill="none"/></svg>
<span style="top:354.5px;font-size:11px;color:#000;right:783.7px;letter-spacing:-0.16px;margin-right:0.16px;">12.3.18</span>
<span style="top:354.5px;font-size:11px;color:#000;left:114.4px;letter-spacing:-0.3px;">23:30</span>
<span id="t81" style="top:354.5px;font-size:11px;right:604.85px;transform:scaleX(1.0117);transform-origin:100% 50%;color:#000;">Hiltzik, Jared [2]</span>
<span style="top:354.5px;font-size:11px;color:#000;left:286.6px;">-</span>
<span id="t82" style="top:354.5px;font-size:11px;left:294.14px;transform:scaleX(0.9646);transform-origin:0 50%;font-weight:bold;color:#ff0000;">Roelofse, Ruan</span>
<span style="top:354.5px;font-size:11px;color:#000;right:434.8px;">0</span>
<span style="top:355.0px;font-size:11px;color:#000;left:455px;">:</span>
<span style="top:354.5px;font-size:11px;color:#000;left:463.2px;">2</span>

<span style="top:354.5px;font-size:11px;color:#000;right:346px;">1,40</span>

<span style="top:354.5px;font-size:11px;color:#000;font-weight:bold;right:314px;letter-spacing:-0.12px;margin-right:0.12px;">2,81</span>
<span style="top:354.5px;font-size:11px;color:#000;right:282px;">2</span>
<span style="top:354.5px;font-size:11px;color:#000;right:246px;">6</span>
<span style="top:354.5px;font-size:11px;color:#000;right:196px;">1</span>
<span style="top:354.5px;font-size:11px;color:#000;right:150.5px;">0</span>
<span style="top:354.5px;font-size:11px;color:#000;right:85px;">0</span>
<div style="left:33px;top:371px;width:770px;height:17px;background:#ece8e0;"></div>
<svg style="left:36px;top:372px" width="15" height="15" viewBox="0 0 15 15"><circle cx="7.5" cy="7.5" r="6" fill="none" stroke="#8c8c8c" stroke-width="1"/><path d="M4.1 7.5 H10.3 M7.9 4.9 L10.5 7.5 L7.9 10.1" stroke="#8c8c8c" stroke-width="1" fill="none"/></svg>
<span style="top:371.5px;font-size:11px;color:#000;right:783.7px;letter-spacing:-0.16px;margin-right:0.16px;">12.3.18</span>
<span style="top:371.5px;font-size:11px;color:#000;left:114.4px;letter-spacing:-0.3px;">23:55</span>
<span id="t83" style="top:371.5px;font-size:11px;right:604.66px;transform:scaleX(0.9764);transform-origin:100% 50%;font-weight:bold;color:#ff0000;">Vukic, Aleksandar [6]</span>
<span style="top:371.5px;font-size:11px;color:#000;left:286.6px;">-</span>
<span id="t84" style="top:371.5px;font-size:11px;left:294.07px;transform:scaleX(1.028);transform-origin:0 50%;color:#000;">Nielsen, Frederik</span>
<span style="top:371.5px;font-size:11px;color:#000;right:434.8px;">2</span>
<span style="top:372.0px;font-size:11px;color:#000;left:455px;">:</span>
<span style="top:371.5px;font-size:11px;color:#000;left:463.2px;">0</span>

<span style="top:371.5px;font-size:11px;color:#000;font-weight:bold;right:346px;letter-spacing:-0.12px;margin-right:0.12px;">1,66</span>

<span style="top:371.5px;font-size:11px;color:#000;right:314px;">2,14</span>
<span style="top:371.5px;font-size:11px;color:#000;right:282px;">6</span>
<span style="top:371.5px;font-size:11px;color:#000;right:246px;">2</span>
<span style="top:371.5px;font-size:11px;color:#000;right:196px;">0</span>
<span style="top:371.5px;font-size:11px;color:#000;right:150.5px;">1</span>
<span style="top:371.5px;font-size:11px;color:#000;right:85px;">0</span>
<svg style="left:15px;top:390px" width="15" height="15" viewBox="0 0 15 15"><circle cx="7.5" cy="7.5" r="6" fill="none" stroke="#1c1810" stroke-width="1.1"/><path d="M4.8 4.8 L9.8 9.8 M6.1 10.0 H10.0 V6.1" stroke="#1c1810" stroke-width="1.2" fill="none"/></svg>
<span id="t85" style="top:390.0px;font-size:12px;left:36.0px;transform:scaleX(0.8736);transform-origin:0 50%;color:#fffbea;">Tennis / Drummondville (CAN)  ($75) - Hard (Indoor)</span>
<span id="t86" style="top:390.0px;font-size:12.5px;left:342.07px;transform:scaleX(1.0282);transform-origin:0 50%;color:#fffbea;">-matches: 22</span>
<span id="t87" style="top:390.0px;font-size:12.5px;left:441.4px;transform:scaleX(1.035);transform-origin:0 50%;color:#fffbea;">favorite 15  outsider 7</span>
<div style="left:33px;top:408px;width:770px;height:20px;background:#ece8e0;"></div>
<div style="left:54px;top:408px;width:749px;height:20px;background:#008080;"></div>
<div style="left:510px;top:408px;width:32px;height:20px;background:#ece8e0;"></div>
<svg style="left:36px;top:410px" width="15" height="15" viewBox="0 0 15 15"><circle cx="7.5" cy="7.5" r="6" fill="none" stroke="#8c8c8c" stroke-width="1"/><path d="M4.1 7.5 H10.3 M7.9 4.9 L10.5 7.5 L7.9 10.1" stroke="#8c8c8c" stroke-width="1" fill="none"/></svg>
<span style="top:409.5px;font-size:11px;color:#fff;right:783.7px;letter-spacing:-0.16px;margin-right:0.16px;">13.3.18</span>
<span style="top:409.5px;font-size:11px;color:#fff;left:114.4px;letter-spacing:-0.3px;">15:00</span>
<span id="t88" style="top:409.5px;font-size:11px;right:604.77px;transform:scaleX(1.1239);transform-origin:100% 50%;font-weight:bold;color:#fff;">Koepfer, Dominik /LH/</span>
<span style="top:409.5px;font-size:11px;color:#fff;left:286.6px;">-</span>
<span id="t89" style="top:409.5px;font-size:11px;left:294.13px;transform:scaleX(0.9688);transform-origin:0 50%;color:#fff;">Krainik, Pavel [WC]</span>
<span style="top:409.5px;font-size:11px;color:#fff;right:434.8px;">2</span>
<span style="top:410.0px;font-size:11px;color:#fff;left:455px;">:</span>
<span style="top:409.5px;font-size:11px;color:#fff;left:463.2px;">1</span>
<svg style="left:510px;top:418px" width="7" height="9" viewBox="0 0 7 9"><path d="M3.5 0 V8.2 M1.3 5.7 L3.5 8.2 L5.7 5.7" stroke="#000" stroke-width="1.2" fill="none"/></svg>
<span style="top:409.5px;font-size:11px;color:#000;font-weight:bold;right:346px;letter-spacing:-0.12px;margin-right:0.12px;">1,09</span>
<svg style="left:542px;top:410px" width="7" height="9" viewBox="0 0 7 9"><path d="M3.5 0.8 V9 M1.3 3.3 L3.5 0.8 L5.7 3.3" stroke="#fff" stroke-width="1.2" fill="none"/></svg>
<span style="top:409.5px;font-size:11px;color:#fff;right:314px;">7,40</span>
<span style="top:409.5px;font-size:11px;color:#fff;right:282px;">3</span>
<span style="top:409.5px;font-size:11px;color:#fff;right:246px;">6</span>
<span style="top:409.5px;font-size:11px;color:#fff;right:196px;">1</span>
<span style="top:409.5px;font-size:11px;color:#fff;right:150.5px;">1</span>
<span style="top:409.5px;font-size:11px;color:#fff;right:85px;">1</span>
<div style="left:33px;top:428px;width:770px;height:17px;background:#d6cdbd;"></div>
<svg style="left:36px;top:429px" width="15" height="15" viewBox="0 0 15 15"><circle cx="7.5" cy="7.5" r="6" fill="none" stroke="#8c8c8c" stroke-width="1"/><path d="M4.1 7.5 H10.3 M7.9 4.9 L10.5 7.5 L7.9 10.1" stroke="#8c8c8c" stroke-width="1" fill="none"/></svg>
<span style="top:428.5px;font-size:11px;color:#000;right:783.7px;letter-spacing:-0.16px;margin-right:0.16px;">13.3.18</span>
<span style="top:428.5px;font-size:11px;color:#000;left:114.4px;letter-spacing:-0.3px;">17:00</span>
<span id="t90" style="top:428.5px;font-size:11px;right:605.1px;transform:scaleX(1.0222);transform-origin:100% 50%;color:#000;">Smith, John Patrick /LH/</span>
<span style="top:428.5px;font-size:11px;color:#000;left:286.6px;">-</span>
<span id="t91" style="top:428.5px;font-size:11px;left:294.14px;transform:scaleX(0.9612);transform-origin:0 50%;font-weight:bold;color:#ff0000;">Harrison, Christian</span>
<span style="top:428.5px;font-size:11px;color:#000;right:434.8px;">1</span>
<span style="top:429.0px;font-size:11px;color:#000;left:455px;">:</span>
<span style="top:428.5px;font-size:11px;color:#000;left:463.2px;">2</span>
<svg style="left:510px;top:430px" width="7" height="8" viewBox="0 0 7 8"><path d="M3.5 0.8 V8 M1.3 3.3 L3.5 0.8 L5.7 3.3" stroke="#000" stroke-width="1.2" fill="none"/></svg>
<span style="top:428.5px;font-size:11px;color:#000;right:346px;">1,52</span>
<svg style="left:542px;top:436px" width="7" height="8" viewBox="0 0 7 8"><path d="M3.5 0 V7.2 M1.3 4.7 L3.5 7.2 L5.7 4.7" stroke="#000" stroke-width="1.2" fill="none"/></svg>
<span style="top:428.5px;font-size:11px;color:#000;font-weight:bold;right:314px;letter-spacing:-0.12px;margin-right:0.12px;">2,53</span>
<span style="top:428.5px;font-size:11px;color:#000;right:282px;">0</span>
<span style="top:428.5px;font-size:11px;color:#000;right:246px;">6</span>
<span style="top:428.5px;font-size:11px;color:#000;right:196px;">1</span>
<span style="top:428.5px;font-size:11px;color:#000;right:150.5px;">0</span>
<span style="top:428.5px;font-size:11px;color:#000;right:85px;">0</span>
<div style="left:33px;top:445px;width:770px;height:17px;background:#ece8e0;"></div>
<svg style="left:36px;top:446px" width="15" height="15" viewBox="0 0 15 15"><circle cx="7.5" cy="7.5" r="6" fill="none" stroke="#8c8c8c" stroke-width="1"/><path d="M4.1 7.5 H10.3 M7.9 4.9 L10.5 7.5 L7.9 10.1" stroke="#8c8c8c" stroke-width="1" fill="none"/></svg>
<span style="top:445.5px;font-size:11px;color:#000;right:783.7px;letter-spacing:-0.16px;margin-right:0.16px;">13.3.18</span>
<span style="top:445.5px;font-size:11px;color:#000;left:114.4px;letter-spacing:-0.3px;">19:00</span>
<span id="t92" style="top:445.5px;font-size:11px;right:605.44px;transform:scaleX(0.9551);transform-origin:100% 50%;font-weight:bold;color:#ff0000;">Scholtz, Nikala</span>
<span style="top:445.5px;font-size:11px;color:#000;left:286.6px;">-</span>
<span id="t93" style="top:445.5px;font-size:11px;left:294.06px;transform:scaleX(1.043);transform-origin:0 50%;color:#000;">Sigouin, Benjamin [WC]</span>
<span style="top:445.5px;font-size:11px;color:#000;right:434.8px;">2</span>
<span style="top:446.0px;font-size:11px;color:#000;left:455px;">:</span>
<span style="top:445.5px;font-size:11px;color:#000;left:463.2px;">1</span>
<svg style="left:510px;top:453px" width="7" height="8" viewBox="0 0 7 8"><path d="M3.5 0 V7.2 M1.3 4.7 L3.5 7.2 L5.7 4.7" stroke="#000" stroke-width="1.2" fill="none"/></svg>
<span style="top:445.5px;font-size:11px;color:#000;font-weight:bold;right:346px;letter-spacing:-0.12px;margin-right:0.12px;">1,68</span>
<svg style="left:542px;top:447px" width="7" height="8" viewBox="0 0 7 8"><path d="M3.5 0.8 V8 M1.3 3.3 L3.5 0.8 L5.7 3.3" stroke="#000" stroke-width="1.2" fill="none"/></svg>
<span style="top:445.5px;font-size:11px;color:#000;right:314px;">2,19</span>
<span style="top:445.5px;font-size:11px;color:#000;right:282px;">6</span>
<span style="top:445.5px;font-size:11px;color:#000;right:246px;">1</span>
<span style="top:445.5px;font-size:11px;color:#000;right:196px;">0</span>
<span style="top:445.5px;font-size:11px;color:#000;right:150.5px;">1</span>
<span style="top:445.5px;font-size:11px;color:#000;right:85px;">0</span>
<div style="left:33px;top:462px;width:770px;height:17px;background:#d6cdbd;"></div>
<svg style="left:36px;top:463px" width="15" height="15" viewBox="0 0 15 15"><circle cx="7.5" cy="7.5" r="6" fill="none" stroke="#8c8c8c" stroke-width="1"/><path d="M4.1 7.5 H10.3 M7.9 4.9 L10.5 7.5 L7.9 10.1" stroke="#8c8c8c" stroke-width="1" fill="none"/></svg>
<span style="top:462.5px;font-size:11px;color:#000;right:783.7px;letter-spacing:-0.16px;margin-right:0.16px;">13.3.18</span>
<span style="top:462.5px;font-size:11px;color:#000;left:114.4px;letter-spacing:-0.3px;">20:50</span>
<span id="t94" style="top:462.5px;font-size:11px;right:604.71px;transform:scaleX(1.0377);transform-origin:100% 50%;color:#000;">Kuhn, Nicola</span>
<span style="top:462.5px;font-size:11px;color:#000;left:286.6px;">-</span>
<span id="t95" style="top:462.5px;font-size:11px;left:294.13px;transform:scaleX(0.9667);transform-origin:0 50%;font-weight:bold;color:#ff0000;">Hiltzik, Jared [LL]</span>
<span style="top:462.5px;font-size:11px;color:#000;right:434.8px;">0</span>
<span style="top:463.0px;font-size:11px;color:#000;left:455px;">:</span>
<span style="top:462.5px;font-size:11px;color:#000;left:463.2px;">2</span>
<svg style="left:510px;top:464px" width="7" height="8" viewBox="0 0 7 8"><path d="M3.5 0.8 V8 M1.3 3.3 L3.5 0.8 L5.7 3.3" stroke="#000" stroke-width="1.2" fill="none"/></svg>
<span style="top:462.5px;font-size:11px;color:#000;right:346px;">1,44</span>
<svg style="left:542px;top:470px" width="7" height="8" viewBox="0 0 7 8"><path d="M3.5 0 V7.2 M1.3 4.7 L3.5 7.2 L5.7 4.7" stroke="#000" stroke-width="1.2" fill="none"/></svg>
<span style="top:462.5px;font-size:11px;color:#000;font-weight:bold;right:314px;letter-spacing:-0.12px;margin-right:0.12px;">2,79</span>
<span style="top:462.5px;font-size:11px;color:#000;right:282px;">4</span>
<span style="top:462.5px;font-size:11px;color:#000;right:246px;">6</span>
<span style="top:462.5px;font-size:11px;color:#000;right:196px;">1</span>
<span style="top:462.5px;font-size:11px;color:#000;right:150.5px;">0</span>
<span style="top:462.5px;font-size:11px;color:#000;right:85px;">0</span>
<div style="left:33px;top:479px;width:770px;height:17px;background:#ece8e0;"></div>
<svg style="left:36px;top:480px" width="15" height="15" viewBox="0 0 15 15"><circle cx="7.5" cy="7.5" r="6" fill="none" stroke="#8c8c8c" stroke-width="1"/><path d="M4.1 7.5 H10.3 M7.9 4.9 L10.5 7.5 L7.9 10.1" stroke="#8c8c8c" stroke-width="1" fill="none"/></svg>
<span style="top:479.5px;font-size:11px;color:#000;right:783.7px;letter-spacing:-0.16px;margin-right:0.16px;">13.3.18</span>
<span style="top:479.5px;font-size:11px;color:#000;left:114.4px;letter-spacing:-0.3px;">23:30</span>
<span id="t96" style="top:479.5px;font-size:11px;right:604.58px;transform:scaleX(1.0129);transform-origin:100% 50%;color:#000;">Broady, Liam /LH/ [4]</span>
<span style="top:479.5px;font-size:11px;color:#000;left:286.6px;">-</span>
<span id="t97" style="top:479.5px;font-size:11px;left:295.1px;transform:scaleX(0.9511);transform-origin:0 50%;font-weight:bold;color:#ff0000;">Aragone, JC [LL]</span>
<span style="top:479.5px;font-size:11px;color:#000;right:434.8px;">1</span>
<span style="top:480.0px;font-size:11px;color:#000;left:455px;">:</span>
<span style="top:479.5px;font-size:11px;color:#000;left:463.2px;">2</span>
<svg style="left:510px;top:481px" width="7" height="8" viewBox="0 0 7 8"><path d="M3.5 0.8 V8 M1.3 3.3 L3.5 0.8 L5.7 3.3" stroke="#000" stroke-width="1.2" fill="none"/></svg>
<span style="top:479.5px;font-size:11px;color:#000;right:346px;">1,60</span>
<svg style="left:542px;top:487px" width="7" height="8" viewBox="0 0 7 8"><path d="M3.5 0 V7.2 M1.3 4.7 L3.5 7.2 L5.7 4.7" stroke="#000" stroke-width="1.2" fill="none"/></svg>
<span style="top:479.5px;font-size:11px;color:#000;font-weight:bold;right:314px;letter-spacing:-0.12px;margin-right:0.12px;">2,34</span>
<span style="top:479.5px;font-size:11px;color:#000;right:282px;">6</span>
<span style="top:479.5px;font-size:11px;color:#000;right:246px;">4</span>
<span style="top:479.5px;font-size:11px;color:#000;right:196px;">0</span>
<span style="top:479.5px;font-size:11px;color:#000;right:150.5px;">0</span>
<span style="top:479.5px;font-size:11px;color:#000;right:85px;">0</span>
<div style="left:33px;top:496px;width:770px;height:17px;background:#d6cdbd;"></div>
<svg style="left:36px;top:497px" width="15" height="15" viewBox="0 0 15 15"><circle cx="7.5" cy="7.5" r="6" fill="none" stroke="#8c8c8c" stroke-width="1"/><path d="M4.1 7.5 H10.3 M7.9 4.9 L10.5 7.5 L7.9 10.1" stroke="#8c8c8c" stroke-width="1" fill="none"/></svg>
<span style="top:496.5px;font-size:11px;color:#000;right:783.7px;letter-spacing:-0.16px;margin-right:0.16px;">13.3.18</span>
<span style="top:496.5px;font-size:11px;color:#000;left:114.4px;letter-spacing:-0.3px;">23:45</span>
<span id="t98" style="top:496.5px;font-size:11px;right:605.04px;transform:scaleX(0.9899);transform-origin:100% 50%;font-weight:bold;color:#ff0000;">Peliwo, Filip [6]</span>
<span style="top:496.5px;font-size:11px;color:#000;left:286.6px;">-</span>
<span id="t99" style="top:496.5px;font-size:11px;left:295.1px;transform:scaleX(1.0296);transform-origin:0 50%;color:#000;">Gonzalez, Alejandro</span>
<span style="top:496.5px;font-size:11px;color:#000;right:434.8px;">2</span>
<span style="top:497.0px;font-size:11px;color:#000;left:455px;">:</span>
<span style="top:496.5px;font-size:11px;color:#000;left:463.2px;">1</span>
<svg style="left:510px;top:498px" width="7" height="8" viewBox="0 0 7 8"><path d="M3.5 0.8 V8 M1.3 3.3 L3.5 0.8 L5.7 3.3" stroke="#000" stroke-width="1.2" fill="none"/></svg>
<span style="top:496.5px;font-size:11px;color:#000;font-weight:bold;right:346px;letter-spacing:-0.12px;margin-right:0.12px;">1,55</span>
<svg style="left:542px;top:504px" width="7" height="8" viewBox="0 0 7 8"><path d="M3.5 0 V7.2 M1.3 4.7 L3.5 7.2 L5.7 4.7" stroke="#000" stroke-width="1.2" fill="none"/></svg>
<span style="top:496.5px;font-size:11px;color:#000;right:314px;">2,45</span>
<span style="top:496.5px;font-size:11px;color:#000;right:282px;">6</span>
<span style="top:496.5px;font-size:11px;color:#000;right:246px;">3</span>
<span style="top:496.5px;font-size:11px;color:#000;right:196px;">0</span>
<span style="top:496.5px;font-size:11px;color:#000;right:150.5px;">1</span>
<span style="top:496.5px;font-size:11px;color:#000;right:85px;">0</span>
<div style="left:33px;top:513px;width:770px;height:17px;background:#ece8e0;"></div>
<svg style="left:36px;top:514px" width="15" height="15" viewBox="0 0 15 15"><circle cx="7.5" cy="7.5" r="6" fill="none" stroke="#8c8c8c" stroke-width="1"/><path d="M4.1 7.5 H10.3 M7.9 4.9 L10.5 7.5 L7.9 10.1" stroke="#8c8c8c" stroke-width="1" fill="none"/></svg>
<span style="top:513.5px;font-size:11px;color:#000;right:783.7px;letter-spacing:-0.16px;margin-right:0.16px;">14.3.18</span>
<span style="top:513.5px;font-size:11px;color:#000;left:114.4px;letter-spacing:-0.3px;">15:00</span>
<span id="t100" style="top:513.5px;font-size:11px;right:604.98px;transform:scaleX(0.9793);transform-origin:100% 50%;font-weight:bold;color:#ff0000;">Kudla, Denis [5]</span>
<span style="top:513.5px;font-size:11px;color:#000;left:286.6px;">-</span>
<span id="t101" style="top:513.5px;font-size:11px;left:294.05px;transform:scaleX(1.0495);transform-origin:0 50%;color:#000;">Escoffier, Antoine [Q]</span>
<span style="top:513.5px;font-size:11px;color:#000;right:434.8px;">2</span>
<span style="top:514.0px;font-size:11px;color:#000;left:455px;">:</span>
<span style="top:513.5px;font-size:11px;color:#000;left:463.2px;">1</span>
<svg style="left:510px;top:515px" width="7" height="8" viewBox="0 0 7 8"><path d="M3.5 0.8 V8 M1.3 3.3 L3.5 0.8 L5.7 3.3" stroke="#000" stroke-width="1.2" fill="none"/></svg>
<span style="top:513.5px;font-size:11px;color:#000;font-weight:bold;right:346px;letter-spacing:-0.12px;margin-right:0.12px;">1,21</span>
<svg style="left:542px;top:521px" width="7" height="8" viewBox="0 0 7 8"><path d="M3.5 0 V7.2 M1.3 4.7 L3.5 7.2 L5.7 4.7" stroke="#000" stroke-width="1.2" fill="none"/></svg>
<span style="top:513.5px;font-size:11px;color:#000;right:314px;">4,40</span>
<span style="top:513.5px;font-size:11px;color:#000;right:282px;">1</span>
<span style="top:513.5px;font-size:11px;color:#000;right:246px;">6</span>
<span style="top:513.5px;font-size:11px;color:#000;right:196px;">1</span>
<span style="top:513.5px;font-size:11px;color:#000;right:150.5px;">1</span>
<span style="top:513.5px;font-size:11px;color:#000;right:85px;">1</span>
<div style="left:33px;top:530px;width:770px;height:17px;background:#d6cdbd;"></div>
<svg style="left:36px;top:531px" width="15" height="15" viewBox="0 0 15 15"><circle cx="7.5" cy="7.5" r="6" fill="none" stroke="#8c8c8c" stroke-width="1"/><path d="M4.1 7.5 H10.3 M7.9 4.9 L10.5 7.5 L7.9 10.1" stroke="#8c8c8c" stroke-width="1" fill="none"/></svg>
<span style="top:530.5px;font-size:11px;color:#000;right:783.7px;letter-spacing:-0.16px;margin-right:0.16px;">14.3.18</span>
<span style="top:530.5px;font-size:11px;color:#000;left:114.4px;letter-spacing:-0.3px;">18:45</span>
<span id="t102" style="top:530.5px;font-size:11px;right:605.18px;transform:scaleX(0.9606);transform-origin:100% 50%;font-weight:bold;color:#ff0000;">Schnur, Brayden [8]</span>
<span style="top:530.5px;font-size:11px;color:#000;left:286.6px;">-</span>
<span id="t103" style="top:530.5px;font-size:11px;left:294.1px;transform:scaleX(1.0045);transform-origin:0 50%;color:#000;">Przysiezny, Michal</span>
<span style="top:530.5px;font-size:11px;color:#000;right:434.8px;">2</span>
<span style="top:531.0px;font-size:11px;color:#000;left:455px;">:</span>
<span style="top:530.5px;font-size:11px;color:#000;left:463.2px;">0</span>

<span style="top:530.5px;font-size:11px;color:#000;font-weight:bold;right:346px;letter-spacing:-0.12px;margin-right:0.12px;">1,52</span>

<span style="top:530.5px;font-size:11px;color:#000;right:314px;">2,53</span>
<span style="top:530.5px;font-size:11px;color:#000;right:282px;">7</span>
<span style="top:530.5px;font-size:11px;color:#000;right:246px;">6</span>
<span style="top:530.5px;font-size:11px;color:#000;right:196px;">0</span>
<span style="top:530.5px;font-size:11px;color:#000;right:150.5px;">1</span>
<span style="top:530.5px;font-size:11px;color:#000;right:85px;">0</span>
<div style="left:33px;top:547px;width:770px;height:17px;background:#ece8e0;"></div>
<svg style="left:36px;top:548px" width="15" height="15" viewBox="0 0 15 15"><circle cx="7.5" cy="7.5" r="6" fill="none" stroke="#8c8c8c" stroke-width="1"/><path d="M4.1 7.5 H10.3 M7.9 4.9 L10.5 7.5 L7.9 10.1" stroke="#8c8c8c" stroke-width="1" fill="none"/></svg>
<span style="top:547.5px;font-size:11px;color:#000;right:783.7px;letter-spacing:-0.16px;margin-right:0.16px;">14.3.18</span>
<span style="top:547.5px;font-size:11px;color:#000;left:114.4px;letter-spacing:-0.3px;">20:10</span>
<span id="t104" style="top:547.5px;font-size:11px;right:604.91px;transform:scaleX(1.0125);transform-origin:100% 50%;font-weight:bold;color:#ff0000;">King, Evan /LH/ [7]</span>
<span style="top:547.5px;font-size:11px;color:#000;left:286.6px;">-</span>
<span id="t105" style="top:547.5px;font-size:11px;left:295.1px;transform:scaleX(1.0192);transform-origin:0 50%;color:#000;">Vukic, Aleksandar [Q]</span>
<span style="top:547.5px;font-size:11px;color:#000;right:434.8px;">2</span>
<span style="top:548.0px;font-size:11px;color:#000;left:455px;">:</span>
<span style="top:547.5px;font-size:11px;color:#000;left:463.2px;">0</span>
<svg style="left:510px;top:555px" width="7" height="8" viewBox="0 0 7 8"><path d="M3.5 0 V7.2 M1.3 4.7 L3.5 7.2 L5.7 4.7" stroke="#000" stroke-width="1.2" fill="none"/></svg>
<span style="top:547.5px;font-size:11px;color:#000;font-weight:bold;right:346px;letter-spacing:-0.12px;margin-right:0.12px;">1,70</span>
<svg style="left:542px;top:549px" width="7" height="8" viewBox="0 0 7 8"><path d="M3.5 0.8 V8 M1.3 3.3 L3.5 0.8 L5.7 3.3" stroke="#000" stroke-width="1.2" fill="none"/></svg>
<span style="top:547.5px;font-size:11px;color:#000;right:314px;">2,15</span>
<span style="top:547.5px;font-size:11px;color:#000;right:282px;">7</span>
<span style="top:547.5px;font-size:11px;color:#000;right:246px;">6</span>
<span style="top:547.5px;font-size:11px;color:#000;right:196px;">0</span>
<span style="top:547.5px;font-size:11px;color:#000;right:150.5px;">1</span>
<span style="top:547.5px;font-size:11px;color:#000;right:85px;">0</span>
<div style="left:33px;top:564px;width:770px;height:17px;background:#d6cdbd;"></div>
<svg style="left:36px;top:565px" width="15" height="15" viewBox="0 0 15 15"><circle cx="7.5" cy="7.5" r="6" fill="none" stroke="#8c8c8c" stroke-width="1"/><path d="M4.1 7.5 H10.3 M7.9 4.9 L10.5 7.5 L7.9 10.1" stroke="#8c8c8c" stroke-width="1" fill="none"/></svg>
<span style="top:564.5px;font-size:11px;color:#000;right:783.7px;letter-spacing:-0.16px;margin-right:0.16px;">14.3.18</span>
<span style="top:564.5px;font-size:11px;color:#000;left:114.4px;letter-spacing:-0.3px;">20:20</span>
<span id="t106" style="top:564.5px;font-size:11px;right:604.9px;transform:scaleX(0.9841);transform-origin:100% 50%;font-weight:bold;color:#ff0000;">Laaksonen, Henri [2]</span>
<span style="top:564.5px;font-size:11px;color:#000;left:286.6px;">-</span>
<span id="t107" style="top:564.5px;font-size:11px;left:295.1px;transform:scaleX(1.0192);transform-origin:0 50%;color:#000;">Gomez, Alejandro [Q]</span>
<span style="top:564.5px;font-size:11px;color:#000;right:434.8px;">2</span>
<span style="top:565.0px;font-size:11px;color:#000;left:455px;">:</span>
<span style="top:564.5px;font-size:11px;color:#000;left:463.2px;">0</span>
<svg style="left:510px;top:572px" width="7" height="8" viewBox="0 0 7 8"><path d="M3.5 0 V7.2 M1.3 4.7 L3.5 7.2 L5.7 4.7" stroke="#000" stroke-width="1.2" fill="none"/></svg>
<span style="top:564.5px;font-size:11px;color:#000;font-weight:bold;right:346px;letter-spacing:-0.12px;margin-right:0.12px;">1,38</span>
<svg style="left:542px;top:566px" width="7" height="8" viewBox="0 0 7 8"><path d="M3.5 0.8 V8 M1.3 3.3 L3.5 0.8 L5.7 3.3" stroke="#000" stroke-width="1.2" fill="none"/></svg>
<span style="top:564.5px;font-size:11px;color:#000;right:314px;">3,04</span>
<span style="top:564.5px;font-size:11px;color:#000;right:282px;">6</span>
<span style="top:564.5px;font-size:11px;color:#000;right:246px;">4</span>
<span style="top:564.5px;font-size:11px;color:#000;right:196px;">0</span>
<span style="top:564.5px;font-size:11px;color:#000;right:150.5px;">1</span>
<span style="top:564.5px;font-size:11px;color:#000;right:85px;">0</span>
<div style="left:13px;top:580px;width:845px;height:20px;background:#fff;"></div>
<div style="left:803px;top:580px;width:55px;height:1px;background:#b0b0b0;"></div>
<svg style="left:846px;top:586px" width="5" height="8" viewBox="0 0 5 8"><path d="M0.8 0.5 L4.2 4 L0.8 7.5 Z" fill="#cdcdcd"/></svg>
<svg style="left:350px;top:586px" width="5" height="8" viewBox="0 0 5 8"><path d="M4.2 0.5 L0.8 4 L4.2 7.5 Z" fill="#cdcdcd"/></svg>
<span id="t108" style="top:582.0px;font-size:11.5px;left:69.55px;transform:scaleX(0.95);transform-origin:0 50%;color:#3c3c3c;">12 / 216</span>
<div style="left:8px;top:603px;width:870px;height:1px;background:#a0a0a0;"></div>
<div style="left:11px;top:606px;width:78px;height:21px;background:#fff;border:1px solid #7a7a7a;"></div>
<span id="t109" style="top:608.5px;font-size:11.5px;left:15.31px;transform:scaleX(0.7865);transform-origin:0 50%;">FILTER</span>
<svg style="left:75px;top:612.5px" width="9" height="7" viewBox="0 0 9 7"><path d="M0.8 1 L4.5 5 L8.2 1" stroke="#333" stroke-width="1.7" fill="none"/></svg>
<div style="left:120px;top:606px;width:227px;height:22px;background:#e1e1e1;border:1px solid #8e8e8e;"></div>
<span id="t110" style="top:609.0px;font-size:11.5px;left:194.03px;transform:scaleX(0.965);transform-origin:0 50%;">not_1_yes_total</span>
<div style="left:407px;top:611px;width:13px;height:13px;background:#fff;border:1px solid #333;"></div>
<span id="t111" style="top:610.0px;font-size:11.5px;left:423.27px;transform:scaleX(1.0294);transform-origin:0 50%;">Competitions:</span>
<div style="left:496px;top:607px;width:170px;height:21px;background:#fff;border:1px solid #7a7a7a;"></div>
<span id="t112" style="top:610.0px;font-size:11.5px;left:500.26px;transform:scaleX(1.0355);transform-origin:0 50%;">Competition from main winc</span>
<svg style="left:652px;top:613.5px" width="9" height="7" viewBox="0 0 9 7"><path d="M0.8 1 L4.5 5 L8.2 1" stroke="#333" stroke-width="1.7" fill="none"/></svg>
<div style="left:742px;top:607px;width:58px;height:21px;background:#e1e1e1;border:1px solid #8e8e8e;"></div>
<span id="t113" style="top:610.0px;font-size:11.5px;left:752.2px;transform:scaleX(0.9049);transform-origin:0 50%;">Analyze</span>
<div style="left:8px;top:630px;width:870px;height:2px;background:#a0a0a0;"></div>
<div style="left:8px;top:632px;width:870px;height:19px;background:#fff;"></div>
<div style="left:252px;top:633px;width:1px;height:17px;background:#d7d7d7;"></div>
<div style="left:545px;top:633px;width:1px;height:17px;background:#d7d7d7;"></div>
<div style="left:618px;top:633px;width:1px;height:17px;background:#d7d7d7;"></div>
<div style="left:699px;top:633px;width:1px;height:17px;background:#d7d7d7;"></div>
<div style="left:734px;top:633px;width:1px;height:17px;background:#d7d7d7;"></div>
<div style="left:762px;top:633px;width:1px;height:17px;background:#d7d7d7;"></div>
<div style="left:802px;top:633px;width:1px;height:17px;background:#d7d7d7;"></div>
<div style="left:8px;top:632px;width:123px;height:19px;background:#fff;border:1px solid #fff;"></div>
<span id="t114" style="top:633.5px;font-size:11.5px;left:12.15px;transform:scaleX(1.046);transform-origin:0 50%;">Marathonbet</span>
<svg style="left:117px;top:637.5px" width="9" height="7" viewBox="0 0 9 7"><path d="M0.8 1 L4.5 5 L8.2 1" stroke="#333" stroke-width="1.7" fill="none"/></svg>
<div style="left:130px;top:632px;width:1px;height:19px;background:#8a8a8a;"></div>
<span id="t115" style="top:634.0px;font-size:11.5px;left:324.87px;transform:scaleX(0.9304);transform-origin:0 50%;">1.3.2018 2:0 (6-2, 6-4) ... [1,08]</span>
<span id="t116" style="top:634.0px;font-size:11.5px;left:559.51px;transform:scaleX(0.9889);transform-origin:0 50%;">Coupons</span>
<span id="t117" style="top:633.5px;font-size:11.5px;left:644.1px;transform:scaleX(1.016);transform-origin:0 50%;">Offer</span>
<span id="t118" style="top:633.5px;font-size:11px;left:670.2px;transform:scaleX(1.3);transform-origin:0 50%;">▼</span>
<span id="t119" style="top:633.5px;font-size:11.5px;left:711.86px;transform:scaleX(0.9364);transform-origin:0 50%;">52</span>
<span id="t120" style="top:634.0px;font-size:11.5px;left:769.61px;transform:scaleX(0.8929);transform-origin:0 50%;">20:37</span>
<span id="t121" style="top:633.5px;font-size:11.5px;left:806.1px;transform:scaleX(1.0333);transform-origin:0 50%;">Online</span>
<span id="t122" style="top:633.5px;font-size:11px;left:840.8px;transform:scaleX(1.3);transform-origin:0 50%;">▼</span>
<svg style="left:742px;top:635px" width="14" height="14" viewBox="0 0 14 14"><circle cx="7" cy="7" r="6" fill="#ffff00" stroke="#222" stroke-width="1"/></svg>
<svg width="0" height="0" style="left:0;top:0"><defs>
<radialGradient id="gg" cx="0.4" cy="0.3" r="0.75"><stop offset="0" stop-color="#baf286"/><stop offset="0.55" stop-color="#3cc032"/><stop offset="1" stop-color="#128616"/></radialGradient>
<radialGradient id="bg" cx="0.4" cy="0.3" r="0.8"><stop offset="0" stop-color="#6db6ff"/><stop offset="0.6" stop-color="#1a6fe0"/><stop offset="1" stop-color="#0a3fa8"/></radialGradient>
<linearGradient id="eg" x1="0" y1="0" x2="0" y2="1"><stop offset="0" stop-color="#6fd45a"/><stop offset="1" stop-color="#1e9a1e"/></linearGradient>
<linearGradient id="cy" x1="0" y1="0" x2="1" y2="0"><stop offset="0" stop-color="#8a8a8a"/><stop offset="0.45" stop-color="#e6e6e6"/><stop offset="1" stop-color="#7a7a7a"/></linearGradient>
</defs></svg>
<svg style="left:16px;top:7px" width="16" height="16" viewBox="0 0 16 16"><circle cx="8" cy="8" r="7.9" fill="#2a2000"/><circle cx="8" cy="8" r="7" fill="#f5cf00"/><circle cx="8" cy="8" r="5.4" fill="none" stroke="#5a4400" stroke-width="1.6" stroke-dasharray="1.1 1.5"/><circle cx="8" cy="8" r="3.5" fill="#fff"/><path d="M6 6.2 H10 M8 6.2 V10.4" stroke="#222" stroke-width="1.6" fill="none"/></svg>
<svg style="left:13px;top:89px" width="16" height="16" viewBox="0 0 16 16"><circle cx="8" cy="8" r="7.6" fill="url(#gg)" stroke="#0b6b10" stroke-width="0.8"/><path d="M12.3 8 H4.6 M7.8 4.6 L4.3 8 L7.8 11.4" stroke="#fff" stroke-width="2.2" fill="none" stroke-linejoin="miter"/></svg>
<svg style="left:118px;top:89px" width="16" height="16" viewBox="0 0 16 16"><circle cx="8" cy="8" r="7.6" fill="url(#gg)" stroke="#0b6b10" stroke-width="0.8"/><path d="M3.7 8 H11.4 M8.2 4.6 L11.7 8 L8.2 11.4" stroke="#fff" stroke-width="2.2" fill="none" stroke-linejoin="miter"/></svg>
<svg style="left:145px;top:89px" width="16" height="16" viewBox="0 0 16 16"><circle cx="8" cy="8" r="7.6" fill="url(#gg)" stroke="#0b6b10" stroke-width="0.8"/><path d="M12.3 8 H4.6 M7.8 4.6 L4.3 8 L7.8 11.4" stroke="#fff" stroke-width="2.2" fill="none" stroke-linejoin="miter"/></svg>
<svg style="left:253px;top:89px" width="16" height="16" viewBox="0 0 16 16"><circle cx="8" cy="8" r="7.6" fill="url(#gg)" stroke="#0b6b10" stroke-width="0.8"/><path d="M3.7 8 H11.4 M8.2 4.6 L11.7 8 L8.2 11.4" stroke="#fff" stroke-width="2.2" fill="none" stroke-linejoin="miter"/></svg>
<div style="left:273px;top:86px;width:18px;height:21px;background:#c9def5;border:1px solid #3c7fd0;"></div>
<svg style="left:274px;top:88.5px" width="16" height="16" viewBox="0 0 16 16"><circle cx="8" cy="8" r="7.2" fill="url(#bg)" stroke="#0a3a9a" stroke-width="0.6"/><circle cx="8" cy="8" r="5.7" fill="none" stroke="#fff" stroke-width="1.1"/><rect x="5.2" y="5.2" width="1.6" height="5.6" fill="#fff"/><path d="M10.8 4.9 L6.9 8 L10.8 11.1 Z" fill="#fff"/></svg>
<svg style="left:381.8px;top:88.5px" width="16" height="16" viewBox="0 0 16 16"><circle cx="8" cy="8" r="7.6" fill="url(#bg)" stroke="#0a3a9a" stroke-width="0.6"/><circle cx="8" cy="8" r="5.7" fill="none" stroke="#fff" stroke-width="1.1"/><rect x="9.2" y="5.2" width="1.6" height="5.6" fill="#fff"/><path d="M5.2 4.9 L9.1 8 L5.2 11.1 Z" fill="#fff"/></svg>
<svg style="left:408px;top:88px" width="13" height="16" viewBox="0 0 13 16"><path d="M0.6 0.6 H9.6 L12.4 3.4 V15.4 H0.6 Z" fill="#fff" stroke="#000" stroke-width="1.2"/><path d="M9.6 0.6 V3.4 H12.4" fill="none" stroke="#000" stroke-width="0.8"/><path d="M1.4 2.5 H9" stroke="#e81818" stroke-width="1.2"/><text x="6.3" y="9.6" text-anchor="middle" font-family="Liberation Mono, monospace" font-weight="bold" font-size="6" fill="#000">JAN</text><text x="6.3" y="14.6" text-anchor="middle" font-family="Liberation Mono, monospace" font-weight="bold" font-size="6" fill="#000">1</text></svg>
<svg style="left:433px;top:88.5px" width="17" height="16" viewBox="0 0 17 16"><path d="M1.2 9.2 L3.6 7.2 L6.6 10.6 L14.6 1.4 L16.2 2.8 L6.8 14.8 Z" fill="#0c1a66"/><path d="M0.8 8.4 L3.2 6.4 L6.2 9.6 L14.4 0.6 L16 2 L6.4 13.4 Z" fill="#12a312"/></svg>
<svg style="left:463px;top:89px" width="15" height="14" viewBox="0 0 15 14"><rect x="0.5" y="0.5" width="14" height="13" rx="2.2" fill="url(#eg)" stroke="#17851a" stroke-width="1"/><path d="M11.2 4 A3.8 3.8 0 1 0 11.2 10 M3.2 6 H9.4 M3.2 8 H9.4" stroke="#fff" stroke-width="1.4" fill="none"/></svg>
<svg style="left:490px;top:88px" width="16" height="16" viewBox="0 0 16 16"><path d="M8 4.5 L9.3 6 L11.4 5.3 L11.8 7.2 L14 7.5 L13.6 9.4 L15.4 10.6 L13.8 12 L14.3 14 L12 14 L10.6 15.5 L8 14.6 L5.4 15.5 L4 14 L1.7 14 L2.2 12 L0.6 10.6 L2.4 9.4 L2 7.5 L4.2 7.2 L4.6 5.3 L6.7 6 Z" fill="#f0b418" stroke="#c98c08" stroke-width="0.6"/><rect x="4.8" y="0.6" width="6" height="8.6" rx="2" fill="url(#cy)" stroke="#6c6c6c" stroke-width="0.6"/></svg>
<svg style="left:516px;top:88px" width="15" height="16" viewBox="0 0 15 16"><path d="M1.5 0.5 H8.5 L11.5 3.5 V15.5 H1.5 Z" fill="#f4f6fb" stroke="#8898c8" stroke-width="1"/><rect x="3" y="6.5" width="7" height="7" fill="#fff" stroke="#1a3ab8" stroke-width="1.2"/><path d="M4.6 9.4 L6.6 11.8 L13.2 3.6" stroke="#e01818" stroke-width="1.7" fill="none"/></svg>
<svg style="left:543px;top:87.8px" width="18" height="18" viewBox="0 0 18 18"><path d="M9 9.6 L2 16.6" stroke="#e8883a" stroke-width="2.6" stroke-linecap="round"/><path d="M8.2 8.6 L2.2 14.8" stroke="#f7c79a" stroke-width="0.8"/><circle cx="11.4" cy="6.2" r="5.2" fill="#dfeefc" stroke="#8aa6cc" stroke-width="1.2"/><path d="M11.4 3.4 V9 M8.6 6.2 H14.2" stroke="#e81818" stroke-width="1.7"/></svg>
<svg style="left:414px;top:56.5px" width="18" height="18" viewBox="0 0 18 18"><path d="M9 9.6 L2 16.6" stroke="#e8883a" stroke-width="2.6" stroke-linecap="round"/><path d="M8.2 8.6 L2.2 14.8" stroke="#f7c79a" stroke-width="0.8"/><circle cx="11.4" cy="6.2" r="5.2" fill="#dfeefc" stroke="#8aa6cc" stroke-width="1.2"/><path d="M11.4 3.4 V9 M8.6 6.2 H14.2" stroke="#e81818" stroke-width="1.7"/></svg>
<svg style="left:568px;top:88px" width="16" height="16" viewBox="0 0 16 16"><rect x="0.5" y="0.5" width="15" height="15" fill="#fff" stroke="#7d93c0" stroke-width="1"/><rect x="2.6" y="9" width="2.6" height="4.6" rx="0.8" fill="#3c7be0"/><rect x="6.5" y="6" width="2.8" height="7.6" rx="0.8" fill="#f0921e"/><rect x="10.6" y="2.6" width="2.8" height="11" rx="0.8" fill="#e0301e"/></svg>
<svg style="left:112px;top:57px" width="15" height="14" viewBox="0 0 15 14"><path d="M5 2.5 H14 M5 7.5 H14 M5 12.5 H14" stroke="#111" stroke-width="1.1"/><path d="M1 1 L2 0.6 V4 M0.6 6 H2.6 L0.6 9 H2.8 M0.6 11 L2.8 13.8 M2.8 11 L0.6 13.8" stroke="#2a5bd7" stroke-width="0.9" fill="none"/></svg>
<svg style="left:241px;top:57px" width="16" height="16" viewBox="0 0 16 16"><path d="M1 2.5 H9 M1 8.5 H9 M1 14.5 H9 M8.5 2 V15 M8.5 4.5 H15 M8.5 11.5 H15" stroke="#111" stroke-width="1.1" fill="none"/></svg>
<svg style="left:305px;top:58px" width="15" height="13" viewBox="0 0 15 13"><rect x="0.5" y="0.5" width="14" height="12" fill="#fff" stroke="#2a5db0" stroke-width="1"/><rect x="0.5" y="0.5" width="14" height="2.6" fill="#2f6fd6"/><rect x="2.4" y="4.2" width="3" height="3" fill="#a9a9d8"/><rect x="6.2" y="4.2" width="3" height="3" fill="#1e6fd0"/><rect x="10" y="4.2" width="3" height="3" fill="#1e9e1e"/><rect x="2.4" y="8.2" width="3" height="3" fill="#f07030"/><rect x="6.2" y="8.2" width="3" height="3" fill="#1040a0"/><rect x="10" y="8.2" width="3" height="3" fill="#d8a010"/></svg>
<svg style="left:364px;top:56px" width="18" height="17" viewBox="0 0 18 17"><path d="M1 15.2 C3 13.5 4.5 16.6 7.5 15 C10 13.8 11 14.5 17.5 13.8" stroke="#1c3cc0" stroke-width="1" fill="none"/><path d="M2.2 13.2 L3.2 9.8 L11 1.2 L14.2 3.6 L6.4 12.6 Z" fill="#d8241c" stroke="#5a1208" stroke-width="1"/><path d="M4.6 10.2 L12 2.2 M5.6 11.6 L13.2 3.2" stroke="#5a1208" stroke-width="0.6"/><path d="M2.2 13.2 L3.2 9.8 L6.4 12.6 Z" fill="#f0c890" stroke="#5a1208" stroke-width="0.6"/></svg>
<svg style="left:478px;top:59px" width="17" height="15" viewBox="0 0 17 15"><path d="M0.5 2.5 H5 L6 3.8 H11.5 V10 H0.5 Z" fill="#e4e4e4" stroke="#8a8a8a" stroke-width="1"/><path d="M2.5 4.5 H7 L8 5.8 H13.5 V12 H2.5 Z" fill="#e9e9e9" stroke="#8a8a8a" stroke-width="1"/><path d="M4.5 6.5 H9 L10 7.8 H15.8 V14.2 H4.5 Z" fill="#efefef" stroke="#808080" stroke-width="1"/></svg>
<svg style="left:554px;top:57px" width="17" height="17" viewBox="0 0 17 17"><path d="M0.8 2.6 V12.4 A4 1.9 0 0 0 8.8 12.4 V2.6" fill="url(#cy)" stroke="#7a7a7a" stroke-width="0.8"/><ellipse cx="4.8" cy="2.6" rx="4" ry="1.9" fill="#ececec" stroke="#7a7a7a" stroke-width="0.8"/><path d="M0.8 7.4 A4 1.9 0 0 0 8.8 7.4" fill="none" stroke="#8a8a8a" stroke-width="0.8"/><path d="M10.2 7.4 h2.8 v3 h3 v2.8 h-3 v3 h-2.8 v-3 h-3 v-2.8 h3 z" fill="#4a4a4a" stroke="#222" stroke-width="0.6"/></svg>
<svg style="left:388px;top:113px" width="16" height="16" viewBox="0 0 16 16"><rect x="0" y="0" width="16" height="16" fill="#e9eef8"/><path d="M0.5 16 V0.5 H16" stroke="#6f86c8" stroke-width="1" fill="none"/><path d="M15.5 0 V15.5 H0" stroke="#000" stroke-width="1" fill="none"/><rect x="0.8" y="7" width="7.4" height="8" fill="#7cba3c" stroke="#4c8c1c" stroke-width="0.8"/><rect x="2" y="8.2" width="5" height="5.6" fill="#a6d66c"/><path d="M2.2 5 L5.2 2 L8.2 5 Z" fill="#5a6072"/><path d="M10 7.2 L13 10.4 L10 13.6 Z" fill="#5a6072"/></svg>
<svg style="left:417px;top:115px" width="17" height="12" viewBox="0 0 17 12"><rect x="0" y="1.6" width="3.2" height="8.8" fill="#000"/><rect x="3.2" y="2.2" width="1.2" height="7.4" fill="#18d8e8"/><path d="M4.6 2.6 H6.4 L8 1 H11 L11.4 2.6 H15.8 V4.4 H11 V5 H13 V6.6 H11.4 V7.2 H12.6 V8.8 H11 V10.2 H6 L4.6 9.2 Z" fill="#f9f58e" stroke="#000" stroke-width="0.7"/><circle cx="1.6" cy="9" r="0.7" fill="#f4ec40"/></svg>
<svg style="left:16px;top:586px" width="10" height="8" viewBox="0 0 10 8"><rect x="0" y="0" width="1.4" height="8" fill="#6c6c6c"/><path d="M5.6 0 L1.6 4 L5.6 8 Z M9.8 0 L5.8 4 L9.8 8 Z" fill="#6c6c6c"/></svg>
<svg style="left:33px;top:586px" width="9" height="8" viewBox="0 0 9 8"><path d="M4.2 0 L0.2 4 L4.2 8 Z M8.6 0 L4.6 4 L8.6 8 Z" fill="#6c6c6c"/></svg>
<svg style="left:52px;top:586px" width="5" height="8" viewBox="0 0 5 8"><path d="M4.4 0 L0.4 4 L4.4 8 Z" fill="#6c6c6c"/></svg>
<svg style="left:122px;top:586px" width="5" height="8" viewBox="0 0 5 8"><path d="M0.4 0 L4.4 4 L0.4 8 Z" fill="#6c6c6c"/></svg>
<svg style="left:137px;top:586px" width="9" height="8" viewBox="0 0 9 8"><path d="M0.2 0 L4.2 4 L0.2 8 Z M4.6 0 L8.6 4 L4.6 8 Z" fill="#6c6c6c"/></svg>
<svg style="left:153px;top:586px" width="10" height="8" viewBox="0 0 10 8"><path d="M0.2 0 L4.2 4 L0.2 8 Z M4.4 0 L8.4 4 L4.4 8 Z" fill="#6c6c6c"/><rect x="8.5" y="0" width="1.4" height="8" fill="#6c6c6c"/></svg>
<svg style="left:170px;top:585px" width="10" height="9" viewBox="0 0 10 9"><path d="M1 7.8 C0.8 3.2 4.6 1.6 7 3.8" stroke="#6c6c6c" stroke-width="2" fill="none"/><path d="M9.6 1.4 V7 H4.2 Z" fill="#6c6c6c"/></svg>
<svg style="left:188px;top:585.5px" width="10" height="9" viewBox="0 0 10 9"><path d="M3.5 1 V8 M0 4.5 H7 M1 2 L6 7 M6 2 L1 7" stroke="#5a5a5a" stroke-width="1"/></svg>
<svg style="left:202.5px;top:585px" width="10" height="9" viewBox="0 0 10 9"><path d="M0.5 0.5 L2 2" stroke="#a8a8a8" stroke-width="1"/><path d="M6.0 1 V8 M2.5 4.5 H9.5 M3.5 2 L8.5 7 M8.5 2 L3.5 7" stroke="#a8a8a8" stroke-width="1"/></svg>
<svg style="left:222px;top:586px" width="8" height="8" viewBox="0 0 8 8"><path d="M0.3 0.3 H7.7 V2.4 L5 4.4 V7.6 H3 V4.4 L0.3 2.4 Z" fill="#5a5a5a"/><path d="M1.5 1.4 H6.5" stroke="#d0d0d0" stroke-width="0.8"/></svg>
<svg style="left:236px;top:583px" width="15" height="15" viewBox="0 0 15 15"><circle cx="7.5" cy="7.5" r="6" fill="#fff" stroke="#c42c28" stroke-width="2.8"/><circle cx="7.5" cy="7.5" r="5.4" fill="none" stroke="#ee9088" stroke-width="1"/><path d="M5 5.6 H9.4 V10" stroke="#1a2470" stroke-width="1.3" fill="none"/></svg>
<svg style="left:256px;top:582px" width="16" height="16" viewBox="0 0 16 16"><path d="M1 0.6 H12.4 V13 H1 Z" fill="#eef2fb" stroke="#5a78d0" stroke-width="1"/><circle cx="9.6" cy="10.2" r="5" fill="url(#gg)" stroke="#1c7a1c" stroke-width="0.8"/><path d="M9.6 7.4 V13 M6.8 10.2 H12.4" stroke="#fff" stroke-width="1.6"/></svg>
<svg style="left:276px;top:583px" width="16" height="15" viewBox="0 0 16 15"><path d="M4.6 12 A5.2 5.2 0 1 1 12.4 7.6" stroke="#2e9a18" stroke-width="3.4" fill="none"/><path d="M4.6 12 A5.2 5.2 0 1 1 12.4 7.6" stroke="#8fdc4c" stroke-width="1.4" fill="none"/><path d="M8.6 7.4 H16 L12.4 13.6 Z" fill="#3aa81e" stroke="#1c7a12" stroke-width="0.6"/></svg>
<svg style="left:95px;top:608.5px" width="16" height="15" viewBox="0 0 17 16"><path d="M1.2 9.2 L3.6 7.2 L6.6 10.6 L14.6 1.4 L16.2 2.8 L6.8 14.8 Z" fill="#0c1a66"/><path d="M0.8 8.4 L3.2 6.4 L6.2 9.6 L14.4 0.6 L16 2 L6.4 13.4 Z" fill="#12a312"/></svg>
<svg style="left:352.6px;top:612.4px" width="17" height="10" viewBox="0 0 17 10"><path d="M0.8 5 L9.6 0.7 V3.6 H16 V6.4 H9.6 V9.3 Z" fill="#ff0000" stroke="#000" stroke-width="0.9" stroke-linejoin="miter"/></svg>
<svg style="left:683px;top:612.4px" width="17" height="10" viewBox="0 0 17 10"><path d="M0.8 5 L9.6 0.7 V3.6 H16 V6.4 H9.6 V9.3 Z" fill="#ff0000" stroke="#000" stroke-width="0.9" stroke-linejoin="miter"/></svg>
<svg style="left:381px;top:608px" width="17" height="17" viewBox="0 0 17 17"><path d="M8.5 0.5 L13.5 5 L12 10 H5 L3.5 5 Z" fill="#fff04a"/><path d="M1 14.6 L3.4 8.4 C5.4 7.6 7.4 8.2 8.5 9.6 C9.6 8.2 11.6 7.6 13.6 8.4 L16 14.6 C13.4 13.6 10.6 13.8 8.5 15.2 C6.4 13.8 3.6 13.6 1 14.6 Z" fill="#fff" stroke="#000" stroke-width="0.9"/><path d="M8.5 9.6 V15" stroke="#000" stroke-width="0.8"/><path d="M1.4 16.3 H15.6" stroke="#1a3ae0" stroke-width="1.4"/><path d="M6.4 3.6 C6.6 1 10.6 1 10.6 3.6 C10.6 5.4 8.6 5.4 8.6 7.4 M8.6 9 V10.4" stroke="#e81010" stroke-width="1.7" fill="none"/></svg>
<svg style="left:716px;top:609px" width="16" height="15" viewBox="0 0 16 15"><rect x="0" y="0" width="16" height="15" fill="#e9eef8"/><path d="M0.5 15 V0.5 H16" stroke="#6f86c8" stroke-width="1" fill="none"/><path d="M15.5 0 V14.5 H0" stroke="#000" stroke-width="1" fill="none"/><path d="M8 2.4 V5.6 M8 9.4 V12.6 M2.6 7.5 H5.8 M10.2 7.5 H13.4" stroke="#26324e" stroke-width="1" stroke-dasharray="1 0.8"/><path d="M6.6 4 L8 2.2 L9.4 4 M6.6 11 L8 12.8 L9.4 11 M4.2 6.1 L2.4 7.5 L4.2 8.9 M11.8 6.1 L13.6 7.5 L11.8 8.9" stroke="#26324e" stroke-width="0.9" fill="none"/></svg>
<svg style="left:868px;top:641px" width="9" height="9" viewBox="0 0 9 9"><g fill="#b8b8b8"><rect x="6" y="0" width="2" height="2"/><rect x="3" y="3" width="2" height="2"/><rect x="6" y="3" width="2" height="2"/><rect x="0" y="6" width="2" height="2"/><rect x="3" y="6" width="2" height="2"/><rect x="6" y="6" width="2" height="2"/></g></svg>
</body></html>
